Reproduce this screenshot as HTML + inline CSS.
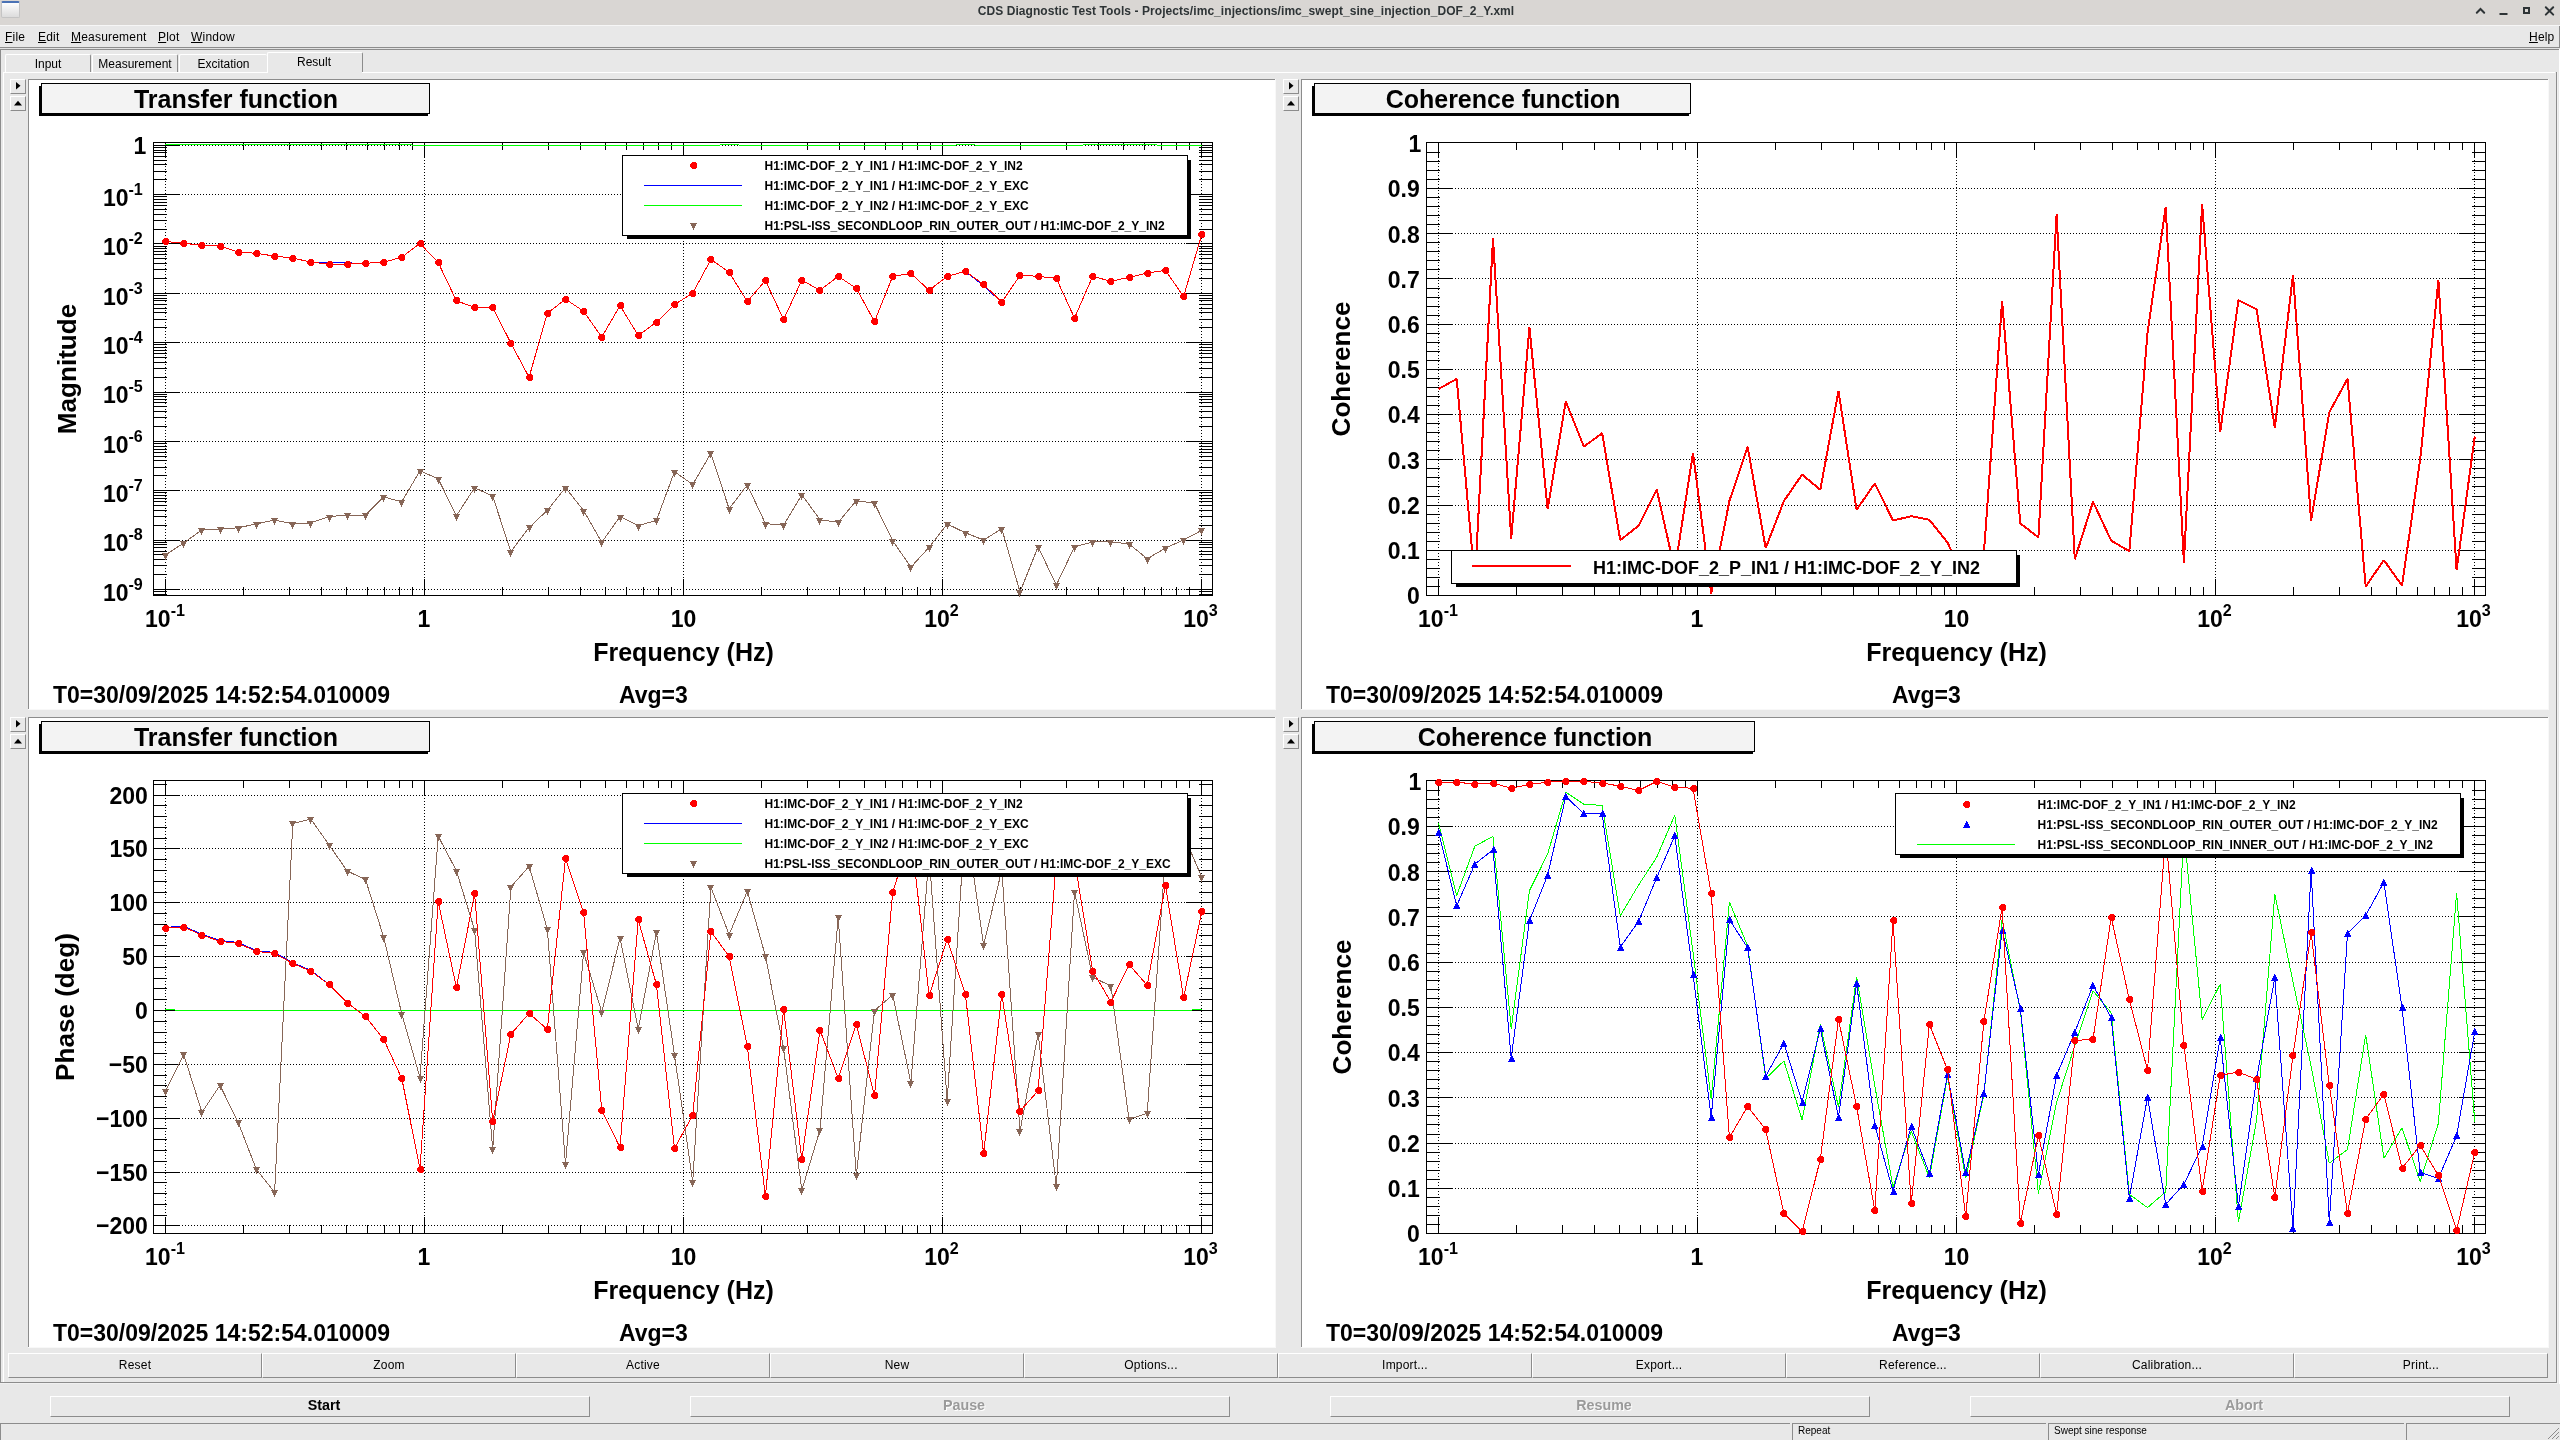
<!DOCTYPE html>
<html><head><meta charset="utf-8"><title>CDS Diagnostic Test Tools</title>
<style>
html,body{margin:0;padding:0;}
body{width:2560px;height:1440px;overflow:hidden;background:#e8e8e8;font-family:"Liberation Sans",sans-serif;font-size:12px;color:#000;position:relative}
div,span{box-sizing:border-box}
#titlebar{position:absolute;left:0;top:0;width:2560px;height:25px;background:#d9d6d3}
#titletext{position:absolute;left:0;top:4px;width:2492px;text-align:center;font-weight:bold;font-size:12px;letter-spacing:0.07px;color:#2e3436;white-space:nowrap}
#menubar{position:absolute;left:0;top:25px;width:2560px;height:23px;background:#e8e8e8;border-top:1px solid #f6f6f6}
.mi{position:absolute;top:4px;font-size:12px;white-space:nowrap;letter-spacing:0.2px}
.mi u{text-decoration:underline;text-underline-offset:0.5px}
.tab{position:absolute;top:54px;height:19px;border:1px solid #ffffff;border-bottom:none;border-right:1px solid #8c8c8c;border-radius:2px 2px 0 0;text-align:center;line-height:19px;font-size:12px;background:#e8e8e8}
.sb{position:absolute;width:16px;height:15px;background:#e8e8e8;border-top:1px solid #ffffff;border-left:1px solid #ffffff;border-right:1px solid #8c8c8c;border-bottom:1px solid #8c8c8c}
.tb{position:absolute;text-align:center;line-height:22px;font-size:12px;letter-spacing:0.2px;border-top:1px solid #ffffff;border-left:1px solid #ffffff;border-right:1px solid #8c8c8c;border-bottom:1px solid #8c8c8c;background:#e8e8e8}
.cb{position:absolute;text-align:center;line-height:16px;font-size:14.3px;font-weight:bold;padding-left:8px;border-top:1px solid #ffffff;border-left:1px solid #ffffff;border-right:1px solid #8c8c8c;border-bottom:1px solid #8c8c8c;background:#e8e8e8}
.cb.dis{color:#9a9a9a;text-shadow:1px 1px 0 #fff}
.st{position:absolute;top:1423px;height:17px;border-top:1px solid #8c8c8c;border-left:1px solid #8c8c8c;font-size:10px;line-height:14px;padding-left:5px;white-space:nowrap}
#root{position:absolute;left:0;top:0;width:2560px;height:1440px;background:#e8e8e8;will-change:transform;overflow:hidden}
</style></head><body><div id="root">
<div id="titlebar">
 <div style="position:absolute;left:1px;top:1px;width:19px;height:17px;border-radius:2px;background:linear-gradient(#fdfdfd,#dcdcdc);border:1px solid #c4c4c4;border-top:2px solid #4a72b5"></div>
 <div id="titletext">CDS Diagnostic Test Tools - Projects/imc_injections/imc_swept_sine_injection_DOF_2_Y.xml</div>
 <svg width="90" height="20" style="position:absolute;left:2470px;top:0" fill="none" stroke="#2e3436" stroke-width="2" stroke-linecap="round">
  <path d="M6.8,12.7 L10.5,9 L14.2,12.7"/>
  <path d="M29.5,14 h8" stroke-linecap="butt"/>
  <rect x="54" y="8" width="5" height="5" stroke-linecap="butt"/>
  <path d="M75.8,7.2 l7.4,7.4 M83.2,7.2 l-7.4,7.4"/>
 </svg>
</div>
<div id="menubar"><span class="mi" style="left:5px"><u>F</u>ile</span><span class="mi" style="left:38px"><u>E</u>dit</span><span class="mi" style="left:71px"><u>M</u>easurement</span><span class="mi" style="left:158px"><u>P</u>lot</span><span class="mi" style="left:191px"><u>W</u>indow</span><span class="mi" style="left:2529px"><u>H</u>elp</span></div>
<div style="position:absolute;left:0;top:47px;width:2560px;height:1px;background:#8c8c8c"></div>
<div style="position:absolute;left:2559px;top:26px;width:1px;height:22px;background:#8c8c8c"></div>
<div style="position:absolute;left:0;top:48px;width:2560px;height:1px;background:#e2e2e2"></div>
<!-- outer frame -->
<div style="position:absolute;left:0;top:49px;width:2559px;height:1px;background:#8c8c8c"></div>
<div style="position:absolute;left:0;top:49px;width:1px;height:1334px;background:#8c8c8c"></div>
<div style="position:absolute;left:2559px;top:49px;width:1px;height:1335px;background:#ffffff"></div>
<div style="position:absolute;left:3px;top:72px;width:1px;height:1310px;background:#ffffff"></div>
<div style="position:absolute;left:2556px;top:72px;width:1px;height:1311px;background:#8c8c8c"></div>
<div style="position:absolute;left:2557px;top:72px;width:1px;height:1312px;background:#f0f0f0"></div>
<!-- tabs -->
<div class="tab" style="left:5px;width:86px">Input</div>
<div class="tab" style="left:92px;width:86px">Measurement</div>
<div class="tab" style="left:179px;width:88px;border-right:none">Excitation</div>
<div class="tab" style="left:267px;top:52px;width:96px;height:21px;line-height:18px;padding-right:2px">Result</div>
<div style="position:absolute;left:3px;top:72px;width:264px;height:1px;background:#ffffff"></div>
<div style="position:absolute;left:362px;top:72px;width:2193px;height:1px;background:#ffffff"></div>
<div class="sb" style="left:10px;top:79px"><svg width="16" height="15" style="position:absolute;left:0;top:0"><path d="M5,2 L9.5,5.7 L5,9.5 z" fill="#000"/></svg></div><div class="sb" style="left:10px;top:96px"><svg width="16" height="15" style="position:absolute;left:0;top:0"><path d="M3,8.5 L7,3.8 L11,8.5 z" fill="#000"/></svg></div><div class="sb" style="left:10px;top:717px"><svg width="16" height="15" style="position:absolute;left:0;top:0"><path d="M5,2 L9.5,5.7 L5,9.5 z" fill="#000"/></svg></div><div class="sb" style="left:10px;top:734px"><svg width="16" height="15" style="position:absolute;left:0;top:0"><path d="M3,8.5 L7,3.8 L11,8.5 z" fill="#000"/></svg></div><div class="sb" style="left:1283px;top:79px"><svg width="16" height="15" style="position:absolute;left:0;top:0"><path d="M5,2 L9.5,5.7 L5,9.5 z" fill="#000"/></svg></div><div class="sb" style="left:1283px;top:96px"><svg width="16" height="15" style="position:absolute;left:0;top:0"><path d="M3,8.5 L7,3.8 L11,8.5 z" fill="#000"/></svg></div><div class="sb" style="left:1283px;top:717px"><svg width="16" height="15" style="position:absolute;left:0;top:0"><path d="M5,2 L9.5,5.7 L5,9.5 z" fill="#000"/></svg></div><div class="sb" style="left:1283px;top:734px"><svg width="16" height="15" style="position:absolute;left:0;top:0"><path d="M3,8.5 L7,3.8 L11,8.5 z" fill="#000"/></svg></div>
<div class="tb" style="left:8px;top:1353px;width:254px;height:25px">Reset</div><div class="tb" style="left:262px;top:1353px;width:254px;height:25px">Zoom</div><div class="tb" style="left:516px;top:1353px;width:254px;height:25px">Active</div><div class="tb" style="left:770px;top:1353px;width:254px;height:25px">New</div><div class="tb" style="left:1024px;top:1353px;width:254px;height:25px">Options...</div><div class="tb" style="left:1278px;top:1353px;width:254px;height:25px">Import...</div><div class="tb" style="left:1532px;top:1353px;width:254px;height:25px">Export...</div><div class="tb" style="left:1786px;top:1353px;width:254px;height:25px">Reference...</div><div class="tb" style="left:2040px;top:1353px;width:254px;height:25px">Calibration...</div><div class="tb" style="left:2294px;top:1353px;width:254px;height:25px">Print...</div>
<div style="position:absolute;left:0;top:1382px;width:2557px;height:1px;background:#8c8c8c"></div>
<div style="position:absolute;left:0;top:1383px;width:2558px;height:1px;background:#f0f0f0"></div>
<div class="cb" style="left:50px;top:1396px;width:540px;height:21px">Start</div><div class="cb dis" style="left:690px;top:1396px;width:540px;height:21px">Pause</div><div class="cb dis" style="left:1330px;top:1396px;width:540px;height:21px">Resume</div><div class="cb dis" style="left:1970px;top:1396px;width:540px;height:21px">Abort</div>
<div class="st" style="left:0;width:1790px"></div>
<div class="st" style="left:1792px;width:254px">Repeat</div>
<div class="st" style="left:2048px;width:356px">Swept sine response</div>
<div class="st" style="left:2406px;width:154px"></div>
<svg width="12" height="12" style="position:absolute;left:2547px;top:1427px" stroke="#8c8c8c" stroke-width="1"><path d="M1,12 L12,1 M5,12 L12,5 M9,12 L12,9"/></svg>
<svg width="2560" height="1440" viewBox="0 0 2560 1440" style="position:absolute;left:0;top:0" font-family="Liberation Sans, sans-serif" fill="#000">
<rect x="29" y="80" width="1246" height="629" fill="#fff"/>
<rect x="28" y="79" width="1247" height="1" fill="#8c8c8c"/>
<rect x="28" y="79" width="1" height="630" fill="#8c8c8c"/>
<rect x="28" y="709" width="1248" height="1" fill="#f8f8f8"/>
<rect x="1275" y="79" width="1" height="631" fill="#f8f8f8"/>
<rect x="1302" y="80" width="1246" height="629" fill="#fff"/>
<rect x="1301" y="79" width="1247" height="1" fill="#8c8c8c"/>
<rect x="1301" y="79" width="1" height="630" fill="#8c8c8c"/>
<rect x="1301" y="709" width="1248" height="1" fill="#f8f8f8"/>
<rect x="2548" y="79" width="1" height="631" fill="#f8f8f8"/>
<rect x="29" y="718" width="1246" height="629" fill="#fff"/>
<rect x="28" y="717" width="1247" height="1" fill="#8c8c8c"/>
<rect x="28" y="717" width="1" height="630" fill="#8c8c8c"/>
<rect x="28" y="1347" width="1248" height="1" fill="#f8f8f8"/>
<rect x="1275" y="717" width="1" height="631" fill="#f8f8f8"/>
<rect x="1302" y="718" width="1246" height="629" fill="#fff"/>
<rect x="1301" y="717" width="1247" height="1" fill="#8c8c8c"/>
<rect x="1301" y="717" width="1" height="630" fill="#8c8c8c"/>
<rect x="1301" y="1347" width="1248" height="1" fill="#f8f8f8"/>
<rect x="2548" y="717" width="1" height="631" fill="#f8f8f8"/>
<line x1="165.5" x2="165.5" y1="142" y2="595" stroke="#000" stroke-width="1" stroke-dasharray="1,2" shape-rendering="crispEdges"/>
<line x1="424.5" x2="424.5" y1="142" y2="595" stroke="#000" stroke-width="1" stroke-dasharray="1,2" shape-rendering="crispEdges"/>
<line x1="683.5" x2="683.5" y1="142" y2="595" stroke="#000" stroke-width="1" stroke-dasharray="1,2" shape-rendering="crispEdges"/>
<line x1="942.5" x2="942.5" y1="142" y2="595" stroke="#000" stroke-width="1" stroke-dasharray="1,2" shape-rendering="crispEdges"/>
<line x1="1201.5" x2="1201.5" y1="142" y2="595" stroke="#000" stroke-width="1" stroke-dasharray="1,2" shape-rendering="crispEdges"/>
<rect x="165" y="579" width="1" height="17" fill="#000"/>
<rect x="165" y="142" width="1" height="16" fill="#000"/>
<rect x="243" y="587" width="1" height="9" fill="#000"/>
<rect x="243" y="142" width="1" height="8" fill="#000"/>
<rect x="289" y="587" width="1" height="9" fill="#000"/>
<rect x="289" y="142" width="1" height="8" fill="#000"/>
<rect x="321" y="587" width="1" height="9" fill="#000"/>
<rect x="321" y="142" width="1" height="8" fill="#000"/>
<rect x="346" y="587" width="1" height="9" fill="#000"/>
<rect x="346" y="142" width="1" height="8" fill="#000"/>
<rect x="367" y="587" width="1" height="9" fill="#000"/>
<rect x="367" y="142" width="1" height="8" fill="#000"/>
<rect x="384" y="587" width="1" height="9" fill="#000"/>
<rect x="384" y="142" width="1" height="8" fill="#000"/>
<rect x="399" y="587" width="1" height="9" fill="#000"/>
<rect x="399" y="142" width="1" height="8" fill="#000"/>
<rect x="412" y="587" width="1" height="9" fill="#000"/>
<rect x="412" y="142" width="1" height="8" fill="#000"/>
<rect x="424" y="579" width="1" height="17" fill="#000"/>
<rect x="424" y="142" width="1" height="16" fill="#000"/>
<rect x="502" y="587" width="1" height="9" fill="#000"/>
<rect x="502" y="142" width="1" height="8" fill="#000"/>
<rect x="548" y="587" width="1" height="9" fill="#000"/>
<rect x="548" y="142" width="1" height="8" fill="#000"/>
<rect x="580" y="587" width="1" height="9" fill="#000"/>
<rect x="580" y="142" width="1" height="8" fill="#000"/>
<rect x="605" y="587" width="1" height="9" fill="#000"/>
<rect x="605" y="142" width="1" height="8" fill="#000"/>
<rect x="626" y="587" width="1" height="9" fill="#000"/>
<rect x="626" y="142" width="1" height="8" fill="#000"/>
<rect x="643" y="587" width="1" height="9" fill="#000"/>
<rect x="643" y="142" width="1" height="8" fill="#000"/>
<rect x="658" y="587" width="1" height="9" fill="#000"/>
<rect x="658" y="142" width="1" height="8" fill="#000"/>
<rect x="671" y="587" width="1" height="9" fill="#000"/>
<rect x="671" y="142" width="1" height="8" fill="#000"/>
<rect x="683" y="579" width="1" height="17" fill="#000"/>
<rect x="683" y="142" width="1" height="16" fill="#000"/>
<rect x="761" y="587" width="1" height="9" fill="#000"/>
<rect x="761" y="142" width="1" height="8" fill="#000"/>
<rect x="807" y="587" width="1" height="9" fill="#000"/>
<rect x="807" y="142" width="1" height="8" fill="#000"/>
<rect x="839" y="587" width="1" height="9" fill="#000"/>
<rect x="839" y="142" width="1" height="8" fill="#000"/>
<rect x="864" y="587" width="1" height="9" fill="#000"/>
<rect x="864" y="142" width="1" height="8" fill="#000"/>
<rect x="885" y="587" width="1" height="9" fill="#000"/>
<rect x="885" y="142" width="1" height="8" fill="#000"/>
<rect x="902" y="587" width="1" height="9" fill="#000"/>
<rect x="902" y="142" width="1" height="8" fill="#000"/>
<rect x="917" y="587" width="1" height="9" fill="#000"/>
<rect x="917" y="142" width="1" height="8" fill="#000"/>
<rect x="930" y="587" width="1" height="9" fill="#000"/>
<rect x="930" y="142" width="1" height="8" fill="#000"/>
<rect x="942" y="579" width="1" height="17" fill="#000"/>
<rect x="942" y="142" width="1" height="16" fill="#000"/>
<rect x="1020" y="587" width="1" height="9" fill="#000"/>
<rect x="1020" y="142" width="1" height="8" fill="#000"/>
<rect x="1066" y="587" width="1" height="9" fill="#000"/>
<rect x="1066" y="142" width="1" height="8" fill="#000"/>
<rect x="1098" y="587" width="1" height="9" fill="#000"/>
<rect x="1098" y="142" width="1" height="8" fill="#000"/>
<rect x="1123" y="587" width="1" height="9" fill="#000"/>
<rect x="1123" y="142" width="1" height="8" fill="#000"/>
<rect x="1144" y="587" width="1" height="9" fill="#000"/>
<rect x="1144" y="142" width="1" height="8" fill="#000"/>
<rect x="1161" y="587" width="1" height="9" fill="#000"/>
<rect x="1161" y="142" width="1" height="8" fill="#000"/>
<rect x="1176" y="587" width="1" height="9" fill="#000"/>
<rect x="1176" y="142" width="1" height="8" fill="#000"/>
<rect x="1189" y="587" width="1" height="9" fill="#000"/>
<rect x="1189" y="142" width="1" height="8" fill="#000"/>
<rect x="1201" y="579" width="1" height="17" fill="#000"/>
<rect x="1201" y="142" width="1" height="16" fill="#000"/>
<rect x="153" y="142" width="1060" height="1" fill="#000"/>
<rect x="153" y="595" width="1060" height="1" fill="#000"/>
<rect x="153" y="142" width="1" height="454" fill="#000"/>
<rect x="1212" y="142" width="1" height="454" fill="#000"/>
<line x1="155" x2="1212" y1="145.5" y2="145.5" stroke="#000" stroke-width="1" stroke-dasharray="1,2" shape-rendering="crispEdges"/>
<rect x="153" y="145" width="27" height="1" fill="#000"/>
<rect x="1186" y="145" width="27" height="1" fill="#000"/>
<line x1="155" x2="1212" y1="194.5" y2="194.5" stroke="#000" stroke-width="1" stroke-dasharray="1,2" shape-rendering="crispEdges"/>
<rect x="153" y="194" width="27" height="1" fill="#000"/>
<rect x="1186" y="194" width="27" height="1" fill="#000"/>
<line x1="155" x2="1212" y1="243.5" y2="243.5" stroke="#000" stroke-width="1" stroke-dasharray="1,2" shape-rendering="crispEdges"/>
<rect x="153" y="243" width="27" height="1" fill="#000"/>
<rect x="1186" y="243" width="27" height="1" fill="#000"/>
<line x1="155" x2="1212" y1="293.5" y2="293.5" stroke="#000" stroke-width="1" stroke-dasharray="1,2" shape-rendering="crispEdges"/>
<rect x="153" y="293" width="27" height="1" fill="#000"/>
<rect x="1186" y="293" width="27" height="1" fill="#000"/>
<line x1="155" x2="1212" y1="342.5" y2="342.5" stroke="#000" stroke-width="1" stroke-dasharray="1,2" shape-rendering="crispEdges"/>
<rect x="153" y="342" width="27" height="1" fill="#000"/>
<rect x="1186" y="342" width="27" height="1" fill="#000"/>
<line x1="155" x2="1212" y1="392.5" y2="392.5" stroke="#000" stroke-width="1" stroke-dasharray="1,2" shape-rendering="crispEdges"/>
<rect x="153" y="392" width="27" height="1" fill="#000"/>
<rect x="1186" y="392" width="27" height="1" fill="#000"/>
<line x1="155" x2="1212" y1="441.5" y2="441.5" stroke="#000" stroke-width="1" stroke-dasharray="1,2" shape-rendering="crispEdges"/>
<rect x="153" y="441" width="27" height="1" fill="#000"/>
<rect x="1186" y="441" width="27" height="1" fill="#000"/>
<line x1="155" x2="1212" y1="490.5" y2="490.5" stroke="#000" stroke-width="1" stroke-dasharray="1,2" shape-rendering="crispEdges"/>
<rect x="153" y="490" width="27" height="1" fill="#000"/>
<rect x="1186" y="490" width="27" height="1" fill="#000"/>
<line x1="155" x2="1212" y1="540.5" y2="540.5" stroke="#000" stroke-width="1" stroke-dasharray="1,2" shape-rendering="crispEdges"/>
<rect x="153" y="540" width="27" height="1" fill="#000"/>
<rect x="1186" y="540" width="27" height="1" fill="#000"/>
<line x1="155" x2="1212" y1="589.5" y2="589.5" stroke="#000" stroke-width="1" stroke-dasharray="1,2" shape-rendering="crispEdges"/>
<rect x="153" y="589" width="27" height="1" fill="#000"/>
<rect x="1186" y="589" width="27" height="1" fill="#000"/>
<rect x="153" y="179" width="14" height="1" fill="#000"/>
<rect x="1199" y="179" width="14" height="1" fill="#000"/>
<rect x="153" y="171" width="14" height="1" fill="#000"/>
<rect x="1199" y="171" width="14" height="1" fill="#000"/>
<rect x="153" y="164" width="14" height="1" fill="#000"/>
<rect x="1199" y="164" width="14" height="1" fill="#000"/>
<rect x="153" y="160" width="14" height="1" fill="#000"/>
<rect x="1199" y="160" width="14" height="1" fill="#000"/>
<rect x="153" y="156" width="14" height="1" fill="#000"/>
<rect x="1199" y="156" width="14" height="1" fill="#000"/>
<rect x="153" y="152" width="14" height="1" fill="#000"/>
<rect x="1199" y="152" width="14" height="1" fill="#000"/>
<rect x="153" y="150" width="14" height="1" fill="#000"/>
<rect x="1199" y="150" width="14" height="1" fill="#000"/>
<rect x="153" y="147" width="14" height="1" fill="#000"/>
<rect x="1199" y="147" width="14" height="1" fill="#000"/>
<rect x="153" y="229" width="14" height="1" fill="#000"/>
<rect x="1199" y="229" width="14" height="1" fill="#000"/>
<rect x="153" y="220" width="14" height="1" fill="#000"/>
<rect x="1199" y="220" width="14" height="1" fill="#000"/>
<rect x="153" y="214" width="14" height="1" fill="#000"/>
<rect x="1199" y="214" width="14" height="1" fill="#000"/>
<rect x="153" y="209" width="14" height="1" fill="#000"/>
<rect x="1199" y="209" width="14" height="1" fill="#000"/>
<rect x="153" y="205" width="14" height="1" fill="#000"/>
<rect x="1199" y="205" width="14" height="1" fill="#000"/>
<rect x="153" y="202" width="14" height="1" fill="#000"/>
<rect x="1199" y="202" width="14" height="1" fill="#000"/>
<rect x="153" y="199" width="14" height="1" fill="#000"/>
<rect x="1199" y="199" width="14" height="1" fill="#000"/>
<rect x="153" y="196" width="14" height="1" fill="#000"/>
<rect x="1199" y="196" width="14" height="1" fill="#000"/>
<rect x="153" y="278" width="14" height="1" fill="#000"/>
<rect x="1199" y="278" width="14" height="1" fill="#000"/>
<rect x="153" y="269" width="14" height="1" fill="#000"/>
<rect x="1199" y="269" width="14" height="1" fill="#000"/>
<rect x="153" y="263" width="14" height="1" fill="#000"/>
<rect x="1199" y="263" width="14" height="1" fill="#000"/>
<rect x="153" y="258" width="14" height="1" fill="#000"/>
<rect x="1199" y="258" width="14" height="1" fill="#000"/>
<rect x="153" y="254" width="14" height="1" fill="#000"/>
<rect x="1199" y="254" width="14" height="1" fill="#000"/>
<rect x="153" y="251" width="14" height="1" fill="#000"/>
<rect x="1199" y="251" width="14" height="1" fill="#000"/>
<rect x="153" y="248" width="14" height="1" fill="#000"/>
<rect x="1199" y="248" width="14" height="1" fill="#000"/>
<rect x="153" y="246" width="14" height="1" fill="#000"/>
<rect x="1199" y="246" width="14" height="1" fill="#000"/>
<rect x="153" y="327" width="14" height="1" fill="#000"/>
<rect x="1199" y="327" width="14" height="1" fill="#000"/>
<rect x="153" y="319" width="14" height="1" fill="#000"/>
<rect x="1199" y="319" width="14" height="1" fill="#000"/>
<rect x="153" y="312" width="14" height="1" fill="#000"/>
<rect x="1199" y="312" width="14" height="1" fill="#000"/>
<rect x="153" y="308" width="14" height="1" fill="#000"/>
<rect x="1199" y="308" width="14" height="1" fill="#000"/>
<rect x="153" y="304" width="14" height="1" fill="#000"/>
<rect x="1199" y="304" width="14" height="1" fill="#000"/>
<rect x="153" y="300" width="14" height="1" fill="#000"/>
<rect x="1199" y="300" width="14" height="1" fill="#000"/>
<rect x="153" y="298" width="14" height="1" fill="#000"/>
<rect x="1199" y="298" width="14" height="1" fill="#000"/>
<rect x="153" y="295" width="14" height="1" fill="#000"/>
<rect x="1199" y="295" width="14" height="1" fill="#000"/>
<rect x="153" y="377" width="14" height="1" fill="#000"/>
<rect x="1199" y="377" width="14" height="1" fill="#000"/>
<rect x="153" y="368" width="14" height="1" fill="#000"/>
<rect x="1199" y="368" width="14" height="1" fill="#000"/>
<rect x="153" y="362" width="14" height="1" fill="#000"/>
<rect x="1199" y="362" width="14" height="1" fill="#000"/>
<rect x="153" y="357" width="14" height="1" fill="#000"/>
<rect x="1199" y="357" width="14" height="1" fill="#000"/>
<rect x="153" y="353" width="14" height="1" fill="#000"/>
<rect x="1199" y="353" width="14" height="1" fill="#000"/>
<rect x="153" y="350" width="14" height="1" fill="#000"/>
<rect x="1199" y="350" width="14" height="1" fill="#000"/>
<rect x="153" y="347" width="14" height="1" fill="#000"/>
<rect x="1199" y="347" width="14" height="1" fill="#000"/>
<rect x="153" y="344" width="14" height="1" fill="#000"/>
<rect x="1199" y="344" width="14" height="1" fill="#000"/>
<rect x="153" y="426" width="14" height="1" fill="#000"/>
<rect x="1199" y="426" width="14" height="1" fill="#000"/>
<rect x="153" y="417" width="14" height="1" fill="#000"/>
<rect x="1199" y="417" width="14" height="1" fill="#000"/>
<rect x="153" y="411" width="14" height="1" fill="#000"/>
<rect x="1199" y="411" width="14" height="1" fill="#000"/>
<rect x="153" y="406" width="14" height="1" fill="#000"/>
<rect x="1199" y="406" width="14" height="1" fill="#000"/>
<rect x="153" y="402" width="14" height="1" fill="#000"/>
<rect x="1199" y="402" width="14" height="1" fill="#000"/>
<rect x="153" y="399" width="14" height="1" fill="#000"/>
<rect x="1199" y="399" width="14" height="1" fill="#000"/>
<rect x="153" y="396" width="14" height="1" fill="#000"/>
<rect x="1199" y="396" width="14" height="1" fill="#000"/>
<rect x="153" y="394" width="14" height="1" fill="#000"/>
<rect x="1199" y="394" width="14" height="1" fill="#000"/>
<rect x="153" y="475" width="14" height="1" fill="#000"/>
<rect x="1199" y="475" width="14" height="1" fill="#000"/>
<rect x="153" y="467" width="14" height="1" fill="#000"/>
<rect x="1199" y="467" width="14" height="1" fill="#000"/>
<rect x="153" y="460" width="14" height="1" fill="#000"/>
<rect x="1199" y="460" width="14" height="1" fill="#000"/>
<rect x="153" y="456" width="14" height="1" fill="#000"/>
<rect x="1199" y="456" width="14" height="1" fill="#000"/>
<rect x="153" y="452" width="14" height="1" fill="#000"/>
<rect x="1199" y="452" width="14" height="1" fill="#000"/>
<rect x="153" y="449" width="14" height="1" fill="#000"/>
<rect x="1199" y="449" width="14" height="1" fill="#000"/>
<rect x="153" y="446" width="14" height="1" fill="#000"/>
<rect x="1199" y="446" width="14" height="1" fill="#000"/>
<rect x="153" y="443" width="14" height="1" fill="#000"/>
<rect x="1199" y="443" width="14" height="1" fill="#000"/>
<rect x="153" y="525" width="14" height="1" fill="#000"/>
<rect x="1199" y="525" width="14" height="1" fill="#000"/>
<rect x="153" y="516" width="14" height="1" fill="#000"/>
<rect x="1199" y="516" width="14" height="1" fill="#000"/>
<rect x="153" y="510" width="14" height="1" fill="#000"/>
<rect x="1199" y="510" width="14" height="1" fill="#000"/>
<rect x="153" y="505" width="14" height="1" fill="#000"/>
<rect x="1199" y="505" width="14" height="1" fill="#000"/>
<rect x="153" y="501" width="14" height="1" fill="#000"/>
<rect x="1199" y="501" width="14" height="1" fill="#000"/>
<rect x="153" y="498" width="14" height="1" fill="#000"/>
<rect x="1199" y="498" width="14" height="1" fill="#000"/>
<rect x="153" y="495" width="14" height="1" fill="#000"/>
<rect x="1199" y="495" width="14" height="1" fill="#000"/>
<rect x="153" y="492" width="14" height="1" fill="#000"/>
<rect x="1199" y="492" width="14" height="1" fill="#000"/>
<rect x="153" y="574" width="14" height="1" fill="#000"/>
<rect x="1199" y="574" width="14" height="1" fill="#000"/>
<rect x="153" y="565" width="14" height="1" fill="#000"/>
<rect x="1199" y="565" width="14" height="1" fill="#000"/>
<rect x="153" y="559" width="14" height="1" fill="#000"/>
<rect x="1199" y="559" width="14" height="1" fill="#000"/>
<rect x="153" y="554" width="14" height="1" fill="#000"/>
<rect x="1199" y="554" width="14" height="1" fill="#000"/>
<rect x="153" y="551" width="14" height="1" fill="#000"/>
<rect x="1199" y="551" width="14" height="1" fill="#000"/>
<rect x="153" y="547" width="14" height="1" fill="#000"/>
<rect x="1199" y="547" width="14" height="1" fill="#000"/>
<rect x="153" y="544" width="14" height="1" fill="#000"/>
<rect x="1199" y="544" width="14" height="1" fill="#000"/>
<rect x="153" y="542" width="14" height="1" fill="#000"/>
<rect x="1199" y="542" width="14" height="1" fill="#000"/>
<rect x="153" y="594" width="14" height="1" fill="#000"/>
<rect x="1199" y="594" width="14" height="1" fill="#000"/>
<rect x="153" y="591" width="14" height="1" fill="#000"/>
<rect x="1199" y="591" width="14" height="1" fill="#000"/>
<polyline points="165.5,241.4 183.7,243.3 201.9,245.2 220.0,246.1 238.2,252.2 256.4,253.3 274.6,256.1 292.8,258.0 310.9,262.2 329.1,262.9 347.3,262.9 365.5,263.3 383.7,262.2 401.8,257.2 420.0,243.4 438.2,262.5 456.4,300.8 474.6,307.3 492.7,307.3 510.9,343.3 529.1,377.3 547.3,313.3 565.5,299.2 583.6,311.3 601.8,337.2 620.0,305.5 638.2,335.5 656.4,322.3 674.5,304.4 692.7,293.3 710.9,259.4 729.1,272.2 747.3,301.6 765.4,280.5 783.6,319.5 801.8,280.2 820.0,290.3 838.2,276.3 856.3,288.3 874.5,321.6 892.7,276.3 910.9,273.4 929.1,290.3 947.2,276.3 965.4,271.4 983.6,285.9 1001.8,302.3 1020.0,275.3 1038.1,276.3 1056.3,278.4 1074.5,318.0 1092.7,276.3 1110.9,281.3 1129.0,277.3 1147.2,273.1 1165.4,270.3 1183.6,296.6 1201.8,234.4" fill="none" stroke="#0000ff" stroke-width="1" shape-rendering="crispEdges" stroke-linejoin="bevel"/>
<rect x="165" y="144" width="247" height="1" fill="#00ff00"/>
<rect x="412" y="145" width="308" height="1" fill="#00ff00"/>
<rect x="720" y="144" width="19" height="1" fill="#00ff00"/>
<rect x="739" y="145" width="217" height="1" fill="#00ff00"/>
<rect x="956" y="144" width="19" height="1" fill="#00ff00"/>
<rect x="975" y="145" width="108" height="1" fill="#00ff00"/>
<rect x="1083" y="144" width="74" height="1" fill="#00ff00"/>
<rect x="1157" y="145" width="45" height="1" fill="#00ff00"/>
<polyline points="165.5,554.8 183.7,543.1 201.9,529.8 220.0,529.1 238.2,527.8 256.4,523.9 274.6,520.0 292.8,523.9 310.9,522.8 329.1,516.6 347.3,515.0 365.5,515.0 383.7,497.0 401.8,501.7 420.0,470.8 438.2,478.8 456.4,515.8 474.6,487.7 492.7,496.3 510.9,551.7 529.1,527.5 547.3,510.3 565.5,487.7 583.6,510.6 601.8,542.3 620.0,516.6 638.2,525.6 656.4,520.5 674.5,471.7 692.7,484.5 710.9,453.3 729.1,508.8 747.3,485.0 765.4,523.6 783.6,525.2 801.8,494.7 820.0,519.7 838.2,522.3 856.3,500.6 874.5,503.3 892.7,540.8 910.9,567.1 929.1,547.3 947.2,524.0 965.4,532.8 983.6,540.0 1001.8,528.8 1020.0,591.9 1038.1,546.9 1056.3,585.0 1074.5,546.9 1092.7,541.9 1110.9,541.9 1129.0,543.8 1147.2,558.8 1165.4,548.1 1183.6,540.0 1201.8,530.3" fill="none" stroke="#876657" stroke-width="1" shape-rendering="crispEdges" stroke-linejoin="bevel"/>
<path d="M161.5,552.5 h8.0 L165.5,560.0 z" fill="#876657" shape-rendering="crispEdges"/>
<path d="M179.5,540.5 h8.0 L183.5,548.0 z" fill="#876657" shape-rendering="crispEdges"/>
<path d="M197.5,527.5 h8.0 L201.5,535.0 z" fill="#876657" shape-rendering="crispEdges"/>
<path d="M216.5,526.5 h8.0 L220.5,534.0 z" fill="#876657" shape-rendering="crispEdges"/>
<path d="M234.5,525.5 h8.0 L238.5,533.0 z" fill="#876657" shape-rendering="crispEdges"/>
<path d="M252.5,521.5 h8.0 L256.5,529.0 z" fill="#876657" shape-rendering="crispEdges"/>
<path d="M270.5,517.5 h8.0 L274.5,525.0 z" fill="#876657" shape-rendering="crispEdges"/>
<path d="M288.5,521.5 h8.0 L292.5,529.0 z" fill="#876657" shape-rendering="crispEdges"/>
<path d="M306.5,520.5 h8.0 L310.5,528.0 z" fill="#876657" shape-rendering="crispEdges"/>
<path d="M325.5,514.5 h8.0 L329.5,522.0 z" fill="#876657" shape-rendering="crispEdges"/>
<path d="M343.5,512.5 h8.0 L347.5,520.0 z" fill="#876657" shape-rendering="crispEdges"/>
<path d="M361.5,512.5 h8.0 L365.5,520.0 z" fill="#876657" shape-rendering="crispEdges"/>
<path d="M379.5,494.5 h8.0 L383.5,502.0 z" fill="#876657" shape-rendering="crispEdges"/>
<path d="M397.5,499.5 h8.0 L401.5,507.0 z" fill="#876657" shape-rendering="crispEdges"/>
<path d="M416.5,468.5 h8.0 L420.5,476.0 z" fill="#876657" shape-rendering="crispEdges"/>
<path d="M434.5,476.5 h8.0 L438.5,484.0 z" fill="#876657" shape-rendering="crispEdges"/>
<path d="M452.5,513.5 h8.0 L456.5,521.0 z" fill="#876657" shape-rendering="crispEdges"/>
<path d="M470.5,485.5 h8.0 L474.5,493.0 z" fill="#876657" shape-rendering="crispEdges"/>
<path d="M488.5,493.5 h8.0 L492.5,501.0 z" fill="#876657" shape-rendering="crispEdges"/>
<path d="M506.5,549.5 h8.0 L510.5,557.0 z" fill="#876657" shape-rendering="crispEdges"/>
<path d="M525.5,524.5 h8.0 L529.5,532.0 z" fill="#876657" shape-rendering="crispEdges"/>
<path d="M543.5,507.5 h8.0 L547.5,515.0 z" fill="#876657" shape-rendering="crispEdges"/>
<path d="M561.5,485.5 h8.0 L565.5,493.0 z" fill="#876657" shape-rendering="crispEdges"/>
<path d="M579.5,508.5 h8.0 L583.5,516.0 z" fill="#876657" shape-rendering="crispEdges"/>
<path d="M597.5,539.5 h8.0 L601.5,547.0 z" fill="#876657" shape-rendering="crispEdges"/>
<path d="M616.5,514.5 h8.0 L620.5,522.0 z" fill="#876657" shape-rendering="crispEdges"/>
<path d="M634.5,523.5 h8.0 L638.5,531.0 z" fill="#876657" shape-rendering="crispEdges"/>
<path d="M652.5,517.5 h8.0 L656.5,525.0 z" fill="#876657" shape-rendering="crispEdges"/>
<path d="M670.5,469.5 h8.0 L674.5,477.0 z" fill="#876657" shape-rendering="crispEdges"/>
<path d="M688.5,481.5 h8.0 L692.5,489.0 z" fill="#876657" shape-rendering="crispEdges"/>
<path d="M706.5,450.5 h8.0 L710.5,458.0 z" fill="#876657" shape-rendering="crispEdges"/>
<path d="M725.5,506.5 h8.0 L729.5,514.0 z" fill="#876657" shape-rendering="crispEdges"/>
<path d="M743.5,482.5 h8.0 L747.5,490.0 z" fill="#876657" shape-rendering="crispEdges"/>
<path d="M761.5,521.5 h8.0 L765.5,529.0 z" fill="#876657" shape-rendering="crispEdges"/>
<path d="M779.5,522.5 h8.0 L783.5,530.0 z" fill="#876657" shape-rendering="crispEdges"/>
<path d="M797.5,492.5 h8.0 L801.5,500.0 z" fill="#876657" shape-rendering="crispEdges"/>
<path d="M815.5,517.5 h8.0 L819.5,525.0 z" fill="#876657" shape-rendering="crispEdges"/>
<path d="M834.5,519.5 h8.0 L838.5,527.0 z" fill="#876657" shape-rendering="crispEdges"/>
<path d="M852.5,498.5 h8.0 L856.5,506.0 z" fill="#876657" shape-rendering="crispEdges"/>
<path d="M870.5,500.5 h8.0 L874.5,508.0 z" fill="#876657" shape-rendering="crispEdges"/>
<path d="M888.5,538.5 h8.0 L892.5,546.0 z" fill="#876657" shape-rendering="crispEdges"/>
<path d="M906.5,564.5 h8.0 L910.5,572.0 z" fill="#876657" shape-rendering="crispEdges"/>
<path d="M925.5,544.5 h8.0 L929.5,552.0 z" fill="#876657" shape-rendering="crispEdges"/>
<path d="M943.5,521.5 h8.0 L947.5,529.0 z" fill="#876657" shape-rendering="crispEdges"/>
<path d="M961.5,530.5 h8.0 L965.5,538.0 z" fill="#876657" shape-rendering="crispEdges"/>
<path d="M979.5,537.5 h8.0 L983.5,545.0 z" fill="#876657" shape-rendering="crispEdges"/>
<path d="M997.5,526.5 h8.0 L1001.5,534.0 z" fill="#876657" shape-rendering="crispEdges"/>
<path d="M1015.5,589.5 h8.0 L1019.5,597.0 z" fill="#876657" shape-rendering="crispEdges"/>
<path d="M1034.5,544.5 h8.0 L1038.5,552.0 z" fill="#876657" shape-rendering="crispEdges"/>
<path d="M1052.5,582.5 h8.0 L1056.5,590.0 z" fill="#876657" shape-rendering="crispEdges"/>
<path d="M1070.5,544.5 h8.0 L1074.5,552.0 z" fill="#876657" shape-rendering="crispEdges"/>
<path d="M1088.5,539.5 h8.0 L1092.5,547.0 z" fill="#876657" shape-rendering="crispEdges"/>
<path d="M1106.5,539.5 h8.0 L1110.5,547.0 z" fill="#876657" shape-rendering="crispEdges"/>
<path d="M1125.5,541.5 h8.0 L1129.5,549.0 z" fill="#876657" shape-rendering="crispEdges"/>
<path d="M1143.5,556.5 h8.0 L1147.5,564.0 z" fill="#876657" shape-rendering="crispEdges"/>
<path d="M1161.5,545.5 h8.0 L1165.5,553.0 z" fill="#876657" shape-rendering="crispEdges"/>
<path d="M1179.5,537.5 h8.0 L1183.5,545.0 z" fill="#876657" shape-rendering="crispEdges"/>
<path d="M1197.5,527.5 h8.0 L1201.5,535.0 z" fill="#876657" shape-rendering="crispEdges"/>
<polyline points="165.5,241.4 183.7,243.3 201.9,245.2 220.0,246.1 238.2,252.2 256.4,253.3 274.6,256.1 292.8,258.0 310.9,262.2 329.1,264.1 347.3,264.1 365.5,263.3 383.7,262.2 401.8,257.2 420.0,243.4 438.2,262.5 456.4,300.8 474.6,307.3 492.7,307.3 510.9,343.3 529.1,377.3 547.3,313.3 565.5,299.2 583.6,311.3 601.8,337.2 620.0,305.5 638.2,335.5 656.4,322.3 674.5,304.4 692.7,293.3 710.9,259.4 729.1,272.2 747.3,301.6 765.4,280.5 783.6,319.5 801.8,280.2 820.0,290.3 838.2,276.3 856.3,288.3 874.5,321.6 892.7,276.3 910.9,273.4 929.1,290.3 947.2,276.3 965.4,271.4 983.6,284.4 1001.8,302.3 1020.0,275.3 1038.1,276.3 1056.3,278.4 1074.5,318.0 1092.7,276.3 1110.9,281.3 1129.0,277.3 1147.2,273.1 1165.4,270.3 1183.6,296.6 1201.8,234.4" fill="none" stroke="#ff0000" stroke-width="1" shape-rendering="crispEdges" stroke-linejoin="bevel"/>
<path d="M164.0,238.0 h3 l2,2 v3 l-2,2 h-3 l-2,-2 v-3 z" fill="#ff0000" shape-rendering="crispEdges"/>
<path d="M182.0,240.0 h3 l2,2 v3 l-2,2 h-3 l-2,-2 v-3 z" fill="#ff0000" shape-rendering="crispEdges"/>
<path d="M200.0,242.0 h3 l2,2 v3 l-2,2 h-3 l-2,-2 v-3 z" fill="#ff0000" shape-rendering="crispEdges"/>
<path d="M219.0,243.0 h3 l2,2 v3 l-2,2 h-3 l-2,-2 v-3 z" fill="#ff0000" shape-rendering="crispEdges"/>
<path d="M237.0,249.0 h3 l2,2 v3 l-2,2 h-3 l-2,-2 v-3 z" fill="#ff0000" shape-rendering="crispEdges"/>
<path d="M255.0,250.0 h3 l2,2 v3 l-2,2 h-3 l-2,-2 v-3 z" fill="#ff0000" shape-rendering="crispEdges"/>
<path d="M273.0,253.0 h3 l2,2 v3 l-2,2 h-3 l-2,-2 v-3 z" fill="#ff0000" shape-rendering="crispEdges"/>
<path d="M291.0,255.0 h3 l2,2 v3 l-2,2 h-3 l-2,-2 v-3 z" fill="#ff0000" shape-rendering="crispEdges"/>
<path d="M309.0,259.0 h3 l2,2 v3 l-2,2 h-3 l-2,-2 v-3 z" fill="#ff0000" shape-rendering="crispEdges"/>
<path d="M328.0,261.0 h3 l2,2 v3 l-2,2 h-3 l-2,-2 v-3 z" fill="#ff0000" shape-rendering="crispEdges"/>
<path d="M346.0,261.0 h3 l2,2 v3 l-2,2 h-3 l-2,-2 v-3 z" fill="#ff0000" shape-rendering="crispEdges"/>
<path d="M364.0,260.0 h3 l2,2 v3 l-2,2 h-3 l-2,-2 v-3 z" fill="#ff0000" shape-rendering="crispEdges"/>
<path d="M382.0,259.0 h3 l2,2 v3 l-2,2 h-3 l-2,-2 v-3 z" fill="#ff0000" shape-rendering="crispEdges"/>
<path d="M400.0,254.0 h3 l2,2 v3 l-2,2 h-3 l-2,-2 v-3 z" fill="#ff0000" shape-rendering="crispEdges"/>
<path d="M419.0,240.0 h3 l2,2 v3 l-2,2 h-3 l-2,-2 v-3 z" fill="#ff0000" shape-rendering="crispEdges"/>
<path d="M437.0,259.0 h3 l2,2 v3 l-2,2 h-3 l-2,-2 v-3 z" fill="#ff0000" shape-rendering="crispEdges"/>
<path d="M455.0,297.0 h3 l2,2 v3 l-2,2 h-3 l-2,-2 v-3 z" fill="#ff0000" shape-rendering="crispEdges"/>
<path d="M473.0,304.0 h3 l2,2 v3 l-2,2 h-3 l-2,-2 v-3 z" fill="#ff0000" shape-rendering="crispEdges"/>
<path d="M491.0,304.0 h3 l2,2 v3 l-2,2 h-3 l-2,-2 v-3 z" fill="#ff0000" shape-rendering="crispEdges"/>
<path d="M509.0,340.0 h3 l2,2 v3 l-2,2 h-3 l-2,-2 v-3 z" fill="#ff0000" shape-rendering="crispEdges"/>
<path d="M528.0,374.0 h3 l2,2 v3 l-2,2 h-3 l-2,-2 v-3 z" fill="#ff0000" shape-rendering="crispEdges"/>
<path d="M546.0,310.0 h3 l2,2 v3 l-2,2 h-3 l-2,-2 v-3 z" fill="#ff0000" shape-rendering="crispEdges"/>
<path d="M564.0,296.0 h3 l2,2 v3 l-2,2 h-3 l-2,-2 v-3 z" fill="#ff0000" shape-rendering="crispEdges"/>
<path d="M582.0,308.0 h3 l2,2 v3 l-2,2 h-3 l-2,-2 v-3 z" fill="#ff0000" shape-rendering="crispEdges"/>
<path d="M600.0,334.0 h3 l2,2 v3 l-2,2 h-3 l-2,-2 v-3 z" fill="#ff0000" shape-rendering="crispEdges"/>
<path d="M619.0,302.0 h3 l2,2 v3 l-2,2 h-3 l-2,-2 v-3 z" fill="#ff0000" shape-rendering="crispEdges"/>
<path d="M637.0,332.0 h3 l2,2 v3 l-2,2 h-3 l-2,-2 v-3 z" fill="#ff0000" shape-rendering="crispEdges"/>
<path d="M655.0,319.0 h3 l2,2 v3 l-2,2 h-3 l-2,-2 v-3 z" fill="#ff0000" shape-rendering="crispEdges"/>
<path d="M673.0,301.0 h3 l2,2 v3 l-2,2 h-3 l-2,-2 v-3 z" fill="#ff0000" shape-rendering="crispEdges"/>
<path d="M691.0,290.0 h3 l2,2 v3 l-2,2 h-3 l-2,-2 v-3 z" fill="#ff0000" shape-rendering="crispEdges"/>
<path d="M709.0,256.0 h3 l2,2 v3 l-2,2 h-3 l-2,-2 v-3 z" fill="#ff0000" shape-rendering="crispEdges"/>
<path d="M728.0,269.0 h3 l2,2 v3 l-2,2 h-3 l-2,-2 v-3 z" fill="#ff0000" shape-rendering="crispEdges"/>
<path d="M746.0,298.0 h3 l2,2 v3 l-2,2 h-3 l-2,-2 v-3 z" fill="#ff0000" shape-rendering="crispEdges"/>
<path d="M764.0,277.0 h3 l2,2 v3 l-2,2 h-3 l-2,-2 v-3 z" fill="#ff0000" shape-rendering="crispEdges"/>
<path d="M782.0,316.0 h3 l2,2 v3 l-2,2 h-3 l-2,-2 v-3 z" fill="#ff0000" shape-rendering="crispEdges"/>
<path d="M800.0,277.0 h3 l2,2 v3 l-2,2 h-3 l-2,-2 v-3 z" fill="#ff0000" shape-rendering="crispEdges"/>
<path d="M818.0,287.0 h3 l2,2 v3 l-2,2 h-3 l-2,-2 v-3 z" fill="#ff0000" shape-rendering="crispEdges"/>
<path d="M837.0,273.0 h3 l2,2 v3 l-2,2 h-3 l-2,-2 v-3 z" fill="#ff0000" shape-rendering="crispEdges"/>
<path d="M855.0,285.0 h3 l2,2 v3 l-2,2 h-3 l-2,-2 v-3 z" fill="#ff0000" shape-rendering="crispEdges"/>
<path d="M873.0,318.0 h3 l2,2 v3 l-2,2 h-3 l-2,-2 v-3 z" fill="#ff0000" shape-rendering="crispEdges"/>
<path d="M891.0,273.0 h3 l2,2 v3 l-2,2 h-3 l-2,-2 v-3 z" fill="#ff0000" shape-rendering="crispEdges"/>
<path d="M909.0,270.0 h3 l2,2 v3 l-2,2 h-3 l-2,-2 v-3 z" fill="#ff0000" shape-rendering="crispEdges"/>
<path d="M928.0,287.0 h3 l2,2 v3 l-2,2 h-3 l-2,-2 v-3 z" fill="#ff0000" shape-rendering="crispEdges"/>
<path d="M946.0,273.0 h3 l2,2 v3 l-2,2 h-3 l-2,-2 v-3 z" fill="#ff0000" shape-rendering="crispEdges"/>
<path d="M964.0,268.0 h3 l2,2 v3 l-2,2 h-3 l-2,-2 v-3 z" fill="#ff0000" shape-rendering="crispEdges"/>
<path d="M982.0,281.0 h3 l2,2 v3 l-2,2 h-3 l-2,-2 v-3 z" fill="#ff0000" shape-rendering="crispEdges"/>
<path d="M1000.0,299.0 h3 l2,2 v3 l-2,2 h-3 l-2,-2 v-3 z" fill="#ff0000" shape-rendering="crispEdges"/>
<path d="M1018.0,272.0 h3 l2,2 v3 l-2,2 h-3 l-2,-2 v-3 z" fill="#ff0000" shape-rendering="crispEdges"/>
<path d="M1037.0,273.0 h3 l2,2 v3 l-2,2 h-3 l-2,-2 v-3 z" fill="#ff0000" shape-rendering="crispEdges"/>
<path d="M1055.0,275.0 h3 l2,2 v3 l-2,2 h-3 l-2,-2 v-3 z" fill="#ff0000" shape-rendering="crispEdges"/>
<path d="M1073.0,315.0 h3 l2,2 v3 l-2,2 h-3 l-2,-2 v-3 z" fill="#ff0000" shape-rendering="crispEdges"/>
<path d="M1091.0,273.0 h3 l2,2 v3 l-2,2 h-3 l-2,-2 v-3 z" fill="#ff0000" shape-rendering="crispEdges"/>
<path d="M1109.0,278.0 h3 l2,2 v3 l-2,2 h-3 l-2,-2 v-3 z" fill="#ff0000" shape-rendering="crispEdges"/>
<path d="M1128.0,274.0 h3 l2,2 v3 l-2,2 h-3 l-2,-2 v-3 z" fill="#ff0000" shape-rendering="crispEdges"/>
<path d="M1146.0,270.0 h3 l2,2 v3 l-2,2 h-3 l-2,-2 v-3 z" fill="#ff0000" shape-rendering="crispEdges"/>
<path d="M1164.0,267.0 h3 l2,2 v3 l-2,2 h-3 l-2,-2 v-3 z" fill="#ff0000" shape-rendering="crispEdges"/>
<path d="M1182.0,293.0 h3 l2,2 v3 l-2,2 h-3 l-2,-2 v-3 z" fill="#ff0000" shape-rendering="crispEdges"/>
<path d="M1200.0,231.0 h3 l2,2 v3 l-2,2 h-3 l-2,-2 v-3 z" fill="#ff0000" shape-rendering="crispEdges"/>
<rect x="627" y="236" width="564" height="3" fill="#000"/>
<rect x="1188" y="160" width="3" height="79" fill="#000"/>
<rect x="622.5" y="155.5" width="565" height="80" fill="#fff" stroke="#000" stroke-width="1"/>
<path d="M692.0,162.0 h3 l2,2 v3 l-2,2 h-3 l-2,-2 v-3 z" fill="#ff0000" shape-rendering="crispEdges"/>
<text x="764.5" y="170.12" font-size="12" text-anchor="start" font-weight="bold" >H1:IMC-DOF_2_Y_IN1 / H1:IMC-DOF_2_Y_IN2</text>
<rect x="644" y="185" width="98" height="1" fill="#0000ff"/>
<text x="764.5" y="190.12" font-size="12" text-anchor="start" font-weight="bold" >H1:IMC-DOF_2_Y_IN1 / H1:IMC-DOF_2_Y_EXC</text>
<rect x="644" y="205" width="98" height="1" fill="#00ff00"/>
<text x="764.5" y="210.12" font-size="12" text-anchor="start" font-weight="bold" >H1:IMC-DOF_2_Y_IN2 / H1:IMC-DOF_2_Y_EXC</text>
<path d="M689.5,222.5 h8.0 L693.5,230.0 z" fill="#876657" shape-rendering="crispEdges"/>
<text x="764.5" y="230.12" font-size="12" text-anchor="start" font-weight="bold" >H1:PSL-ISS_SECONDLOOP_RIN_OUTER_OUT / H1:IMC-DOF_2_Y_IN2</text>
<text transform="translate(165.0,627) scale(1,1.06)" font-size="23" text-anchor="middle" font-weight="bold" >10<tspan font-size="16.1" dy="-10.3">-1</tspan></text>
<text transform="translate(424.0,627) scale(1,1.06)" font-size="23" text-anchor="middle" font-weight="bold" >1</text>
<text transform="translate(683.5,627) scale(1,1.06)" font-size="23" text-anchor="middle" font-weight="bold" >10</text>
<text transform="translate(941.5,627) scale(1,1.06)" font-size="23" text-anchor="middle" font-weight="bold" >10<tspan font-size="16.1" dy="-10.3">2</tspan></text>
<text transform="translate(1200.5,627) scale(1,1.06)" font-size="23" text-anchor="middle" font-weight="bold" >10<tspan font-size="16.1" dy="-10.3">3</tspan></text>
<text transform="translate(146.2,154) scale(1,1.06)" font-size="23" text-anchor="end" font-weight="bold" >1</text>
<text transform="translate(142.8,205.9) scale(1,1.06)" font-size="23" text-anchor="end" font-weight="bold" >10<tspan font-size="16.1" dy="-10.3">-1</tspan></text>
<text transform="translate(142.8,255.25) scale(1,1.06)" font-size="23" text-anchor="end" font-weight="bold" >10<tspan font-size="16.1" dy="-10.3">-2</tspan></text>
<text transform="translate(142.8,304.6) scale(1,1.06)" font-size="23" text-anchor="end" font-weight="bold" >10<tspan font-size="16.1" dy="-10.3">-3</tspan></text>
<text transform="translate(142.8,353.95) scale(1,1.06)" font-size="23" text-anchor="end" font-weight="bold" >10<tspan font-size="16.1" dy="-10.3">-4</tspan></text>
<text transform="translate(142.8,403.3) scale(1,1.06)" font-size="23" text-anchor="end" font-weight="bold" >10<tspan font-size="16.1" dy="-10.3">-5</tspan></text>
<text transform="translate(142.8,452.65000000000003) scale(1,1.06)" font-size="23" text-anchor="end" font-weight="bold" >10<tspan font-size="16.1" dy="-10.3">-6</tspan></text>
<text transform="translate(142.8,502.0) scale(1,1.06)" font-size="23" text-anchor="end" font-weight="bold" >10<tspan font-size="16.1" dy="-10.3">-7</tspan></text>
<text transform="translate(142.8,551.3499999999999) scale(1,1.06)" font-size="23" text-anchor="end" font-weight="bold" >10<tspan font-size="16.1" dy="-10.3">-8</tspan></text>
<text transform="translate(142.8,600.7) scale(1,1.06)" font-size="23" text-anchor="end" font-weight="bold" >10<tspan font-size="16.1" dy="-10.3">-9</tspan></text>
<text x="683.5" y="661" font-size="25" text-anchor="middle" font-weight="bold" >Frequency (Hz)</text>
<text transform="translate(75.5,369.0) rotate(-90)" font-size="26.1" text-anchor="middle" font-weight="bold">Magnitude</text>
<text x="53" y="703" font-size="23" text-anchor="start" font-weight="bold" >T0=30/09/2025 14:52:54.010009</text>
<text x="619" y="703" font-size="23" text-anchor="start" font-weight="bold" >Avg=3</text>
<rect x="39" y="86" width="389" height="30" fill="#000"/>
<rect x="41.5" y="83.5" width="388" height="30" fill="#f3f3f3" stroke="#000" stroke-width="1"/>
<text x="236.0" y="107.5" font-size="25" text-anchor="middle" font-weight="bold" >Transfer function</text>
<line x1="1438.5" x2="1438.5" y1="142" y2="595" stroke="#000" stroke-width="1" stroke-dasharray="1,2" shape-rendering="crispEdges"/>
<line x1="1697.5" x2="1697.5" y1="142" y2="595" stroke="#000" stroke-width="1" stroke-dasharray="1,2" shape-rendering="crispEdges"/>
<line x1="1956.5" x2="1956.5" y1="142" y2="595" stroke="#000" stroke-width="1" stroke-dasharray="1,2" shape-rendering="crispEdges"/>
<line x1="2215.5" x2="2215.5" y1="142" y2="595" stroke="#000" stroke-width="1" stroke-dasharray="1,2" shape-rendering="crispEdges"/>
<line x1="2474.5" x2="2474.5" y1="142" y2="595" stroke="#000" stroke-width="1" stroke-dasharray="1,2" shape-rendering="crispEdges"/>
<rect x="1438" y="579" width="1" height="17" fill="#000"/>
<rect x="1438" y="142" width="1" height="16" fill="#000"/>
<rect x="1516" y="587" width="1" height="9" fill="#000"/>
<rect x="1516" y="142" width="1" height="8" fill="#000"/>
<rect x="1562" y="587" width="1" height="9" fill="#000"/>
<rect x="1562" y="142" width="1" height="8" fill="#000"/>
<rect x="1594" y="587" width="1" height="9" fill="#000"/>
<rect x="1594" y="142" width="1" height="8" fill="#000"/>
<rect x="1619" y="587" width="1" height="9" fill="#000"/>
<rect x="1619" y="142" width="1" height="8" fill="#000"/>
<rect x="1640" y="587" width="1" height="9" fill="#000"/>
<rect x="1640" y="142" width="1" height="8" fill="#000"/>
<rect x="1657" y="587" width="1" height="9" fill="#000"/>
<rect x="1657" y="142" width="1" height="8" fill="#000"/>
<rect x="1672" y="587" width="1" height="9" fill="#000"/>
<rect x="1672" y="142" width="1" height="8" fill="#000"/>
<rect x="1685" y="587" width="1" height="9" fill="#000"/>
<rect x="1685" y="142" width="1" height="8" fill="#000"/>
<rect x="1697" y="579" width="1" height="17" fill="#000"/>
<rect x="1697" y="142" width="1" height="16" fill="#000"/>
<rect x="1775" y="587" width="1" height="9" fill="#000"/>
<rect x="1775" y="142" width="1" height="8" fill="#000"/>
<rect x="1821" y="587" width="1" height="9" fill="#000"/>
<rect x="1821" y="142" width="1" height="8" fill="#000"/>
<rect x="1853" y="587" width="1" height="9" fill="#000"/>
<rect x="1853" y="142" width="1" height="8" fill="#000"/>
<rect x="1878" y="587" width="1" height="9" fill="#000"/>
<rect x="1878" y="142" width="1" height="8" fill="#000"/>
<rect x="1899" y="587" width="1" height="9" fill="#000"/>
<rect x="1899" y="142" width="1" height="8" fill="#000"/>
<rect x="1916" y="587" width="1" height="9" fill="#000"/>
<rect x="1916" y="142" width="1" height="8" fill="#000"/>
<rect x="1931" y="587" width="1" height="9" fill="#000"/>
<rect x="1931" y="142" width="1" height="8" fill="#000"/>
<rect x="1944" y="587" width="1" height="9" fill="#000"/>
<rect x="1944" y="142" width="1" height="8" fill="#000"/>
<rect x="1956" y="579" width="1" height="17" fill="#000"/>
<rect x="1956" y="142" width="1" height="16" fill="#000"/>
<rect x="2034" y="587" width="1" height="9" fill="#000"/>
<rect x="2034" y="142" width="1" height="8" fill="#000"/>
<rect x="2080" y="587" width="1" height="9" fill="#000"/>
<rect x="2080" y="142" width="1" height="8" fill="#000"/>
<rect x="2112" y="587" width="1" height="9" fill="#000"/>
<rect x="2112" y="142" width="1" height="8" fill="#000"/>
<rect x="2137" y="587" width="1" height="9" fill="#000"/>
<rect x="2137" y="142" width="1" height="8" fill="#000"/>
<rect x="2158" y="587" width="1" height="9" fill="#000"/>
<rect x="2158" y="142" width="1" height="8" fill="#000"/>
<rect x="2175" y="587" width="1" height="9" fill="#000"/>
<rect x="2175" y="142" width="1" height="8" fill="#000"/>
<rect x="2190" y="587" width="1" height="9" fill="#000"/>
<rect x="2190" y="142" width="1" height="8" fill="#000"/>
<rect x="2203" y="587" width="1" height="9" fill="#000"/>
<rect x="2203" y="142" width="1" height="8" fill="#000"/>
<rect x="2215" y="579" width="1" height="17" fill="#000"/>
<rect x="2215" y="142" width="1" height="16" fill="#000"/>
<rect x="2293" y="587" width="1" height="9" fill="#000"/>
<rect x="2293" y="142" width="1" height="8" fill="#000"/>
<rect x="2339" y="587" width="1" height="9" fill="#000"/>
<rect x="2339" y="142" width="1" height="8" fill="#000"/>
<rect x="2371" y="587" width="1" height="9" fill="#000"/>
<rect x="2371" y="142" width="1" height="8" fill="#000"/>
<rect x="2396" y="587" width="1" height="9" fill="#000"/>
<rect x="2396" y="142" width="1" height="8" fill="#000"/>
<rect x="2417" y="587" width="1" height="9" fill="#000"/>
<rect x="2417" y="142" width="1" height="8" fill="#000"/>
<rect x="2434" y="587" width="1" height="9" fill="#000"/>
<rect x="2434" y="142" width="1" height="8" fill="#000"/>
<rect x="2449" y="587" width="1" height="9" fill="#000"/>
<rect x="2449" y="142" width="1" height="8" fill="#000"/>
<rect x="2462" y="587" width="1" height="9" fill="#000"/>
<rect x="2462" y="142" width="1" height="8" fill="#000"/>
<rect x="2474" y="579" width="1" height="17" fill="#000"/>
<rect x="2474" y="142" width="1" height="16" fill="#000"/>
<rect x="1426" y="142" width="1060" height="1" fill="#000"/>
<rect x="1426" y="595" width="1060" height="1" fill="#000"/>
<rect x="1426" y="142" width="1" height="454" fill="#000"/>
<rect x="2485" y="142" width="1" height="454" fill="#000"/>
<line x1="1428" x2="2485" y1="550.5" y2="550.5" stroke="#000" stroke-width="1" stroke-dasharray="1,2" shape-rendering="crispEdges"/>
<rect x="1426" y="550" width="27" height="1" fill="#000"/>
<rect x="2459" y="550" width="27" height="1" fill="#000"/>
<line x1="1428" x2="2485" y1="505.5" y2="505.5" stroke="#000" stroke-width="1" stroke-dasharray="1,2" shape-rendering="crispEdges"/>
<rect x="1426" y="505" width="27" height="1" fill="#000"/>
<rect x="2459" y="505" width="27" height="1" fill="#000"/>
<line x1="1428" x2="2485" y1="459.5" y2="459.5" stroke="#000" stroke-width="1" stroke-dasharray="1,2" shape-rendering="crispEdges"/>
<rect x="1426" y="459" width="27" height="1" fill="#000"/>
<rect x="2459" y="459" width="27" height="1" fill="#000"/>
<line x1="1428" x2="2485" y1="414.5" y2="414.5" stroke="#000" stroke-width="1" stroke-dasharray="1,2" shape-rendering="crispEdges"/>
<rect x="1426" y="414" width="27" height="1" fill="#000"/>
<rect x="2459" y="414" width="27" height="1" fill="#000"/>
<line x1="1428" x2="2485" y1="369.5" y2="369.5" stroke="#000" stroke-width="1" stroke-dasharray="1,2" shape-rendering="crispEdges"/>
<rect x="1426" y="369" width="27" height="1" fill="#000"/>
<rect x="2459" y="369" width="27" height="1" fill="#000"/>
<line x1="1428" x2="2485" y1="324.5" y2="324.5" stroke="#000" stroke-width="1" stroke-dasharray="1,2" shape-rendering="crispEdges"/>
<rect x="1426" y="324" width="27" height="1" fill="#000"/>
<rect x="2459" y="324" width="27" height="1" fill="#000"/>
<line x1="1428" x2="2485" y1="278.5" y2="278.5" stroke="#000" stroke-width="1" stroke-dasharray="1,2" shape-rendering="crispEdges"/>
<rect x="1426" y="278" width="27" height="1" fill="#000"/>
<rect x="2459" y="278" width="27" height="1" fill="#000"/>
<line x1="1428" x2="2485" y1="233.5" y2="233.5" stroke="#000" stroke-width="1" stroke-dasharray="1,2" shape-rendering="crispEdges"/>
<rect x="1426" y="233" width="27" height="1" fill="#000"/>
<rect x="2459" y="233" width="27" height="1" fill="#000"/>
<line x1="1428" x2="2485" y1="188.5" y2="188.5" stroke="#000" stroke-width="1" stroke-dasharray="1,2" shape-rendering="crispEdges"/>
<rect x="1426" y="188" width="27" height="1" fill="#000"/>
<rect x="2459" y="188" width="27" height="1" fill="#000"/>
<rect x="1426" y="586" width="14" height="1" fill="#000"/>
<rect x="2472" y="586" width="14" height="1" fill="#000"/>
<rect x="1426" y="577" width="14" height="1" fill="#000"/>
<rect x="2472" y="577" width="14" height="1" fill="#000"/>
<rect x="1426" y="568" width="14" height="1" fill="#000"/>
<rect x="2472" y="568" width="14" height="1" fill="#000"/>
<rect x="1426" y="559" width="14" height="1" fill="#000"/>
<rect x="2472" y="559" width="14" height="1" fill="#000"/>
<rect x="1426" y="541" width="14" height="1" fill="#000"/>
<rect x="2472" y="541" width="14" height="1" fill="#000"/>
<rect x="1426" y="532" width="14" height="1" fill="#000"/>
<rect x="2472" y="532" width="14" height="1" fill="#000"/>
<rect x="1426" y="523" width="14" height="1" fill="#000"/>
<rect x="2472" y="523" width="14" height="1" fill="#000"/>
<rect x="1426" y="514" width="14" height="1" fill="#000"/>
<rect x="2472" y="514" width="14" height="1" fill="#000"/>
<rect x="1426" y="496" width="14" height="1" fill="#000"/>
<rect x="2472" y="496" width="14" height="1" fill="#000"/>
<rect x="1426" y="486" width="14" height="1" fill="#000"/>
<rect x="2472" y="486" width="14" height="1" fill="#000"/>
<rect x="1426" y="477" width="14" height="1" fill="#000"/>
<rect x="2472" y="477" width="14" height="1" fill="#000"/>
<rect x="1426" y="468" width="14" height="1" fill="#000"/>
<rect x="2472" y="468" width="14" height="1" fill="#000"/>
<rect x="1426" y="450" width="14" height="1" fill="#000"/>
<rect x="2472" y="450" width="14" height="1" fill="#000"/>
<rect x="1426" y="441" width="14" height="1" fill="#000"/>
<rect x="2472" y="441" width="14" height="1" fill="#000"/>
<rect x="1426" y="432" width="14" height="1" fill="#000"/>
<rect x="2472" y="432" width="14" height="1" fill="#000"/>
<rect x="1426" y="423" width="14" height="1" fill="#000"/>
<rect x="2472" y="423" width="14" height="1" fill="#000"/>
<rect x="1426" y="405" width="14" height="1" fill="#000"/>
<rect x="2472" y="405" width="14" height="1" fill="#000"/>
<rect x="1426" y="396" width="14" height="1" fill="#000"/>
<rect x="2472" y="396" width="14" height="1" fill="#000"/>
<rect x="1426" y="387" width="14" height="1" fill="#000"/>
<rect x="2472" y="387" width="14" height="1" fill="#000"/>
<rect x="1426" y="378" width="14" height="1" fill="#000"/>
<rect x="2472" y="378" width="14" height="1" fill="#000"/>
<rect x="1426" y="360" width="14" height="1" fill="#000"/>
<rect x="2472" y="360" width="14" height="1" fill="#000"/>
<rect x="1426" y="351" width="14" height="1" fill="#000"/>
<rect x="2472" y="351" width="14" height="1" fill="#000"/>
<rect x="1426" y="342" width="14" height="1" fill="#000"/>
<rect x="2472" y="342" width="14" height="1" fill="#000"/>
<rect x="1426" y="333" width="14" height="1" fill="#000"/>
<rect x="2472" y="333" width="14" height="1" fill="#000"/>
<rect x="1426" y="315" width="14" height="1" fill="#000"/>
<rect x="2472" y="315" width="14" height="1" fill="#000"/>
<rect x="1426" y="306" width="14" height="1" fill="#000"/>
<rect x="2472" y="306" width="14" height="1" fill="#000"/>
<rect x="1426" y="297" width="14" height="1" fill="#000"/>
<rect x="2472" y="297" width="14" height="1" fill="#000"/>
<rect x="1426" y="288" width="14" height="1" fill="#000"/>
<rect x="2472" y="288" width="14" height="1" fill="#000"/>
<rect x="1426" y="269" width="14" height="1" fill="#000"/>
<rect x="2472" y="269" width="14" height="1" fill="#000"/>
<rect x="1426" y="260" width="14" height="1" fill="#000"/>
<rect x="2472" y="260" width="14" height="1" fill="#000"/>
<rect x="1426" y="251" width="14" height="1" fill="#000"/>
<rect x="2472" y="251" width="14" height="1" fill="#000"/>
<rect x="1426" y="242" width="14" height="1" fill="#000"/>
<rect x="2472" y="242" width="14" height="1" fill="#000"/>
<rect x="1426" y="224" width="14" height="1" fill="#000"/>
<rect x="2472" y="224" width="14" height="1" fill="#000"/>
<rect x="1426" y="215" width="14" height="1" fill="#000"/>
<rect x="2472" y="215" width="14" height="1" fill="#000"/>
<rect x="1426" y="206" width="14" height="1" fill="#000"/>
<rect x="2472" y="206" width="14" height="1" fill="#000"/>
<rect x="1426" y="197" width="14" height="1" fill="#000"/>
<rect x="2472" y="197" width="14" height="1" fill="#000"/>
<rect x="1426" y="179" width="14" height="1" fill="#000"/>
<rect x="2472" y="179" width="14" height="1" fill="#000"/>
<rect x="1426" y="170" width="14" height="1" fill="#000"/>
<rect x="2472" y="170" width="14" height="1" fill="#000"/>
<rect x="1426" y="161" width="14" height="1" fill="#000"/>
<rect x="2472" y="161" width="14" height="1" fill="#000"/>
<rect x="1426" y="152" width="14" height="1" fill="#000"/>
<rect x="2472" y="152" width="14" height="1" fill="#000"/>
<polyline points="1438.5,389.0 1456.7,378.9 1474.9,582.0 1493.0,238.3 1511.2,538.5 1529.4,327.3 1547.6,509.0 1565.8,401.5 1583.9,446.7 1602.1,433.1 1620.3,540.1 1638.5,525.8 1656.7,489.5 1674.8,570.0 1693.0,453.1 1711.2,593.6 1729.4,501.0 1747.6,446.7 1765.7,548.1 1783.9,501.0 1802.1,474.6 1820.3,489.8 1838.5,391.0 1856.6,509.8 1874.8,483.4 1893.0,520.5 1911.2,516.2 1929.4,519.8 1947.5,542.5 1965.7,582.0 1983.9,553.0 2002.1,300.8 2020.3,523.4 2038.4,537.4 2056.6,214.4 2074.8,559.3 2093.0,501.8 2111.2,540.6 2129.3,551.3 2147.5,333.0 2165.7,207.0 2183.9,562.5 2202.1,204.0 2220.2,432.0 2238.4,300.2 2256.6,309.2 2274.8,427.5 2293.0,274.8 2311.1,520.5 2329.3,412.3 2347.5,378.8 2365.7,586.5 2383.9,560.1 2402.0,585.7 2420.2,459.5 2438.4,280.4 2456.6,570.0 2474.8,436.5" fill="none" stroke="#ff0000" stroke-width="2" shape-rendering="crispEdges" stroke-linejoin="bevel"/>
<rect x="1456" y="584" width="564" height="3" fill="#000"/>
<rect x="2017" y="555" width="3" height="32" fill="#000"/>
<rect x="1451.5" y="550.5" width="565" height="33" fill="#fff" stroke="#000" stroke-width="1"/>
<rect x="1472" y="565" width="99" height="2" fill="#ff0000"/>
<text x="1593" y="573.78" font-size="18" text-anchor="start" font-weight="bold" >H1:IMC-DOF_2_P_IN1 / H1:IMC-DOF_2_Y_IN2</text>
<text transform="translate(1438.0,627) scale(1,1.06)" font-size="23" text-anchor="middle" font-weight="bold" >10<tspan font-size="16.1" dy="-10.3">-1</tspan></text>
<text transform="translate(1697.0,627) scale(1,1.06)" font-size="23" text-anchor="middle" font-weight="bold" >1</text>
<text transform="translate(1956.5,627) scale(1,1.06)" font-size="23" text-anchor="middle" font-weight="bold" >10</text>
<text transform="translate(2214.5,627) scale(1,1.06)" font-size="23" text-anchor="middle" font-weight="bold" >10<tspan font-size="16.1" dy="-10.3">2</tspan></text>
<text transform="translate(2473.5,627) scale(1,1.06)" font-size="23" text-anchor="middle" font-weight="bold" >10<tspan font-size="16.1" dy="-10.3">3</tspan></text>
<text transform="translate(1419.8,604.3) scale(1,1.06)" font-size="23" text-anchor="end" font-weight="bold" >0</text>
<text transform="translate(1419.8,559.0799999999999) scale(1,1.06)" font-size="23" text-anchor="end" font-weight="bold" >0.1</text>
<text transform="translate(1419.8,513.86) scale(1,1.06)" font-size="23" text-anchor="end" font-weight="bold" >0.2</text>
<text transform="translate(1419.8,468.64000000000004) scale(1,1.06)" font-size="23" text-anchor="end" font-weight="bold" >0.3</text>
<text transform="translate(1419.8,423.42) scale(1,1.06)" font-size="23" text-anchor="end" font-weight="bold" >0.4</text>
<text transform="translate(1419.8,378.2) scale(1,1.06)" font-size="23" text-anchor="end" font-weight="bold" >0.5</text>
<text transform="translate(1419.8,332.98) scale(1,1.06)" font-size="23" text-anchor="end" font-weight="bold" >0.6</text>
<text transform="translate(1419.8,287.76000000000005) scale(1,1.06)" font-size="23" text-anchor="end" font-weight="bold" >0.7</text>
<text transform="translate(1419.8,242.54000000000002) scale(1,1.06)" font-size="23" text-anchor="end" font-weight="bold" >0.8</text>
<text transform="translate(1419.8,197.32) scale(1,1.06)" font-size="23" text-anchor="end" font-weight="bold" >0.9</text>
<text transform="translate(1421.3,152.10000000000002) scale(1,1.06)" font-size="23" text-anchor="end" font-weight="bold" >1</text>
<text x="1956.5" y="661" font-size="25" text-anchor="middle" font-weight="bold" >Frequency (Hz)</text>
<text transform="translate(1350.0,369.0) rotate(-90)" font-size="26.1" text-anchor="middle" font-weight="bold">Coherence</text>
<text x="1326" y="703" font-size="23" text-anchor="start" font-weight="bold" >T0=30/09/2025 14:52:54.010009</text>
<text x="1892" y="703" font-size="23" text-anchor="start" font-weight="bold" >Avg=3</text>
<rect x="1312" y="86" width="377" height="30" fill="#000"/>
<rect x="1314.5" y="83.5" width="376" height="30" fill="#f3f3f3" stroke="#000" stroke-width="1"/>
<text x="1503.0" y="107.5" font-size="25" text-anchor="middle" font-weight="bold" >Coherence function</text>
<line x1="165.5" x2="165.5" y1="780" y2="1233" stroke="#000" stroke-width="1" stroke-dasharray="1,2" shape-rendering="crispEdges"/>
<line x1="424.5" x2="424.5" y1="780" y2="1233" stroke="#000" stroke-width="1" stroke-dasharray="1,2" shape-rendering="crispEdges"/>
<line x1="683.5" x2="683.5" y1="780" y2="1233" stroke="#000" stroke-width="1" stroke-dasharray="1,2" shape-rendering="crispEdges"/>
<line x1="942.5" x2="942.5" y1="780" y2="1233" stroke="#000" stroke-width="1" stroke-dasharray="1,2" shape-rendering="crispEdges"/>
<line x1="1201.5" x2="1201.5" y1="780" y2="1233" stroke="#000" stroke-width="1" stroke-dasharray="1,2" shape-rendering="crispEdges"/>
<rect x="165" y="1217" width="1" height="17" fill="#000"/>
<rect x="165" y="780" width="1" height="16" fill="#000"/>
<rect x="243" y="1225" width="1" height="9" fill="#000"/>
<rect x="243" y="780" width="1" height="8" fill="#000"/>
<rect x="289" y="1225" width="1" height="9" fill="#000"/>
<rect x="289" y="780" width="1" height="8" fill="#000"/>
<rect x="321" y="1225" width="1" height="9" fill="#000"/>
<rect x="321" y="780" width="1" height="8" fill="#000"/>
<rect x="346" y="1225" width="1" height="9" fill="#000"/>
<rect x="346" y="780" width="1" height="8" fill="#000"/>
<rect x="367" y="1225" width="1" height="9" fill="#000"/>
<rect x="367" y="780" width="1" height="8" fill="#000"/>
<rect x="384" y="1225" width="1" height="9" fill="#000"/>
<rect x="384" y="780" width="1" height="8" fill="#000"/>
<rect x="399" y="1225" width="1" height="9" fill="#000"/>
<rect x="399" y="780" width="1" height="8" fill="#000"/>
<rect x="412" y="1225" width="1" height="9" fill="#000"/>
<rect x="412" y="780" width="1" height="8" fill="#000"/>
<rect x="424" y="1217" width="1" height="17" fill="#000"/>
<rect x="424" y="780" width="1" height="16" fill="#000"/>
<rect x="502" y="1225" width="1" height="9" fill="#000"/>
<rect x="502" y="780" width="1" height="8" fill="#000"/>
<rect x="548" y="1225" width="1" height="9" fill="#000"/>
<rect x="548" y="780" width="1" height="8" fill="#000"/>
<rect x="580" y="1225" width="1" height="9" fill="#000"/>
<rect x="580" y="780" width="1" height="8" fill="#000"/>
<rect x="605" y="1225" width="1" height="9" fill="#000"/>
<rect x="605" y="780" width="1" height="8" fill="#000"/>
<rect x="626" y="1225" width="1" height="9" fill="#000"/>
<rect x="626" y="780" width="1" height="8" fill="#000"/>
<rect x="643" y="1225" width="1" height="9" fill="#000"/>
<rect x="643" y="780" width="1" height="8" fill="#000"/>
<rect x="658" y="1225" width="1" height="9" fill="#000"/>
<rect x="658" y="780" width="1" height="8" fill="#000"/>
<rect x="671" y="1225" width="1" height="9" fill="#000"/>
<rect x="671" y="780" width="1" height="8" fill="#000"/>
<rect x="683" y="1217" width="1" height="17" fill="#000"/>
<rect x="683" y="780" width="1" height="16" fill="#000"/>
<rect x="761" y="1225" width="1" height="9" fill="#000"/>
<rect x="761" y="780" width="1" height="8" fill="#000"/>
<rect x="807" y="1225" width="1" height="9" fill="#000"/>
<rect x="807" y="780" width="1" height="8" fill="#000"/>
<rect x="839" y="1225" width="1" height="9" fill="#000"/>
<rect x="839" y="780" width="1" height="8" fill="#000"/>
<rect x="864" y="1225" width="1" height="9" fill="#000"/>
<rect x="864" y="780" width="1" height="8" fill="#000"/>
<rect x="885" y="1225" width="1" height="9" fill="#000"/>
<rect x="885" y="780" width="1" height="8" fill="#000"/>
<rect x="902" y="1225" width="1" height="9" fill="#000"/>
<rect x="902" y="780" width="1" height="8" fill="#000"/>
<rect x="917" y="1225" width="1" height="9" fill="#000"/>
<rect x="917" y="780" width="1" height="8" fill="#000"/>
<rect x="930" y="1225" width="1" height="9" fill="#000"/>
<rect x="930" y="780" width="1" height="8" fill="#000"/>
<rect x="942" y="1217" width="1" height="17" fill="#000"/>
<rect x="942" y="780" width="1" height="16" fill="#000"/>
<rect x="1020" y="1225" width="1" height="9" fill="#000"/>
<rect x="1020" y="780" width="1" height="8" fill="#000"/>
<rect x="1066" y="1225" width="1" height="9" fill="#000"/>
<rect x="1066" y="780" width="1" height="8" fill="#000"/>
<rect x="1098" y="1225" width="1" height="9" fill="#000"/>
<rect x="1098" y="780" width="1" height="8" fill="#000"/>
<rect x="1123" y="1225" width="1" height="9" fill="#000"/>
<rect x="1123" y="780" width="1" height="8" fill="#000"/>
<rect x="1144" y="1225" width="1" height="9" fill="#000"/>
<rect x="1144" y="780" width="1" height="8" fill="#000"/>
<rect x="1161" y="1225" width="1" height="9" fill="#000"/>
<rect x="1161" y="780" width="1" height="8" fill="#000"/>
<rect x="1176" y="1225" width="1" height="9" fill="#000"/>
<rect x="1176" y="780" width="1" height="8" fill="#000"/>
<rect x="1189" y="1225" width="1" height="9" fill="#000"/>
<rect x="1189" y="780" width="1" height="8" fill="#000"/>
<rect x="1201" y="1217" width="1" height="17" fill="#000"/>
<rect x="1201" y="780" width="1" height="16" fill="#000"/>
<rect x="153" y="780" width="1060" height="1" fill="#000"/>
<rect x="153" y="1233" width="1060" height="1" fill="#000"/>
<rect x="153" y="780" width="1" height="454" fill="#000"/>
<rect x="1212" y="780" width="1" height="454" fill="#000"/>
<line x1="155" x2="1212" y1="1225.5" y2="1225.5" stroke="#000" stroke-width="1" stroke-dasharray="1,2" shape-rendering="crispEdges"/>
<rect x="153" y="1225" width="27" height="1" fill="#000"/>
<rect x="1186" y="1225" width="27" height="1" fill="#000"/>
<line x1="155" x2="1212" y1="1172.5" y2="1172.5" stroke="#000" stroke-width="1" stroke-dasharray="1,2" shape-rendering="crispEdges"/>
<rect x="153" y="1172" width="27" height="1" fill="#000"/>
<rect x="1186" y="1172" width="27" height="1" fill="#000"/>
<line x1="155" x2="1212" y1="1118.5" y2="1118.5" stroke="#000" stroke-width="1" stroke-dasharray="1,2" shape-rendering="crispEdges"/>
<rect x="153" y="1118" width="27" height="1" fill="#000"/>
<rect x="1186" y="1118" width="27" height="1" fill="#000"/>
<line x1="155" x2="1212" y1="1064.5" y2="1064.5" stroke="#000" stroke-width="1" stroke-dasharray="1,2" shape-rendering="crispEdges"/>
<rect x="153" y="1064" width="27" height="1" fill="#000"/>
<rect x="1186" y="1064" width="27" height="1" fill="#000"/>
<line x1="155" x2="1212" y1="1010.5" y2="1010.5" stroke="#000" stroke-width="1" stroke-dasharray="1,2" shape-rendering="crispEdges"/>
<rect x="153" y="1010" width="27" height="1" fill="#000"/>
<rect x="1186" y="1010" width="27" height="1" fill="#000"/>
<line x1="155" x2="1212" y1="956.5" y2="956.5" stroke="#000" stroke-width="1" stroke-dasharray="1,2" shape-rendering="crispEdges"/>
<rect x="153" y="956" width="27" height="1" fill="#000"/>
<rect x="1186" y="956" width="27" height="1" fill="#000"/>
<line x1="155" x2="1212" y1="902.5" y2="902.5" stroke="#000" stroke-width="1" stroke-dasharray="1,2" shape-rendering="crispEdges"/>
<rect x="153" y="902" width="27" height="1" fill="#000"/>
<rect x="1186" y="902" width="27" height="1" fill="#000"/>
<line x1="155" x2="1212" y1="848.5" y2="848.5" stroke="#000" stroke-width="1" stroke-dasharray="1,2" shape-rendering="crispEdges"/>
<rect x="153" y="848" width="27" height="1" fill="#000"/>
<rect x="1186" y="848" width="27" height="1" fill="#000"/>
<line x1="155" x2="1212" y1="795.5" y2="795.5" stroke="#000" stroke-width="1" stroke-dasharray="1,2" shape-rendering="crispEdges"/>
<rect x="153" y="795" width="27" height="1" fill="#000"/>
<rect x="1186" y="795" width="27" height="1" fill="#000"/>
<rect x="153" y="1215" width="14" height="1" fill="#000"/>
<rect x="1199" y="1215" width="14" height="1" fill="#000"/>
<rect x="153" y="1204" width="14" height="1" fill="#000"/>
<rect x="1199" y="1204" width="14" height="1" fill="#000"/>
<rect x="153" y="1193" width="14" height="1" fill="#000"/>
<rect x="1199" y="1193" width="14" height="1" fill="#000"/>
<rect x="153" y="1182" width="14" height="1" fill="#000"/>
<rect x="1199" y="1182" width="14" height="1" fill="#000"/>
<rect x="153" y="1161" width="14" height="1" fill="#000"/>
<rect x="1199" y="1161" width="14" height="1" fill="#000"/>
<rect x="153" y="1150" width="14" height="1" fill="#000"/>
<rect x="1199" y="1150" width="14" height="1" fill="#000"/>
<rect x="153" y="1139" width="14" height="1" fill="#000"/>
<rect x="1199" y="1139" width="14" height="1" fill="#000"/>
<rect x="153" y="1128" width="14" height="1" fill="#000"/>
<rect x="1199" y="1128" width="14" height="1" fill="#000"/>
<rect x="153" y="1107" width="14" height="1" fill="#000"/>
<rect x="1199" y="1107" width="14" height="1" fill="#000"/>
<rect x="153" y="1096" width="14" height="1" fill="#000"/>
<rect x="1199" y="1096" width="14" height="1" fill="#000"/>
<rect x="153" y="1085" width="14" height="1" fill="#000"/>
<rect x="1199" y="1085" width="14" height="1" fill="#000"/>
<rect x="153" y="1075" width="14" height="1" fill="#000"/>
<rect x="1199" y="1075" width="14" height="1" fill="#000"/>
<rect x="153" y="1053" width="14" height="1" fill="#000"/>
<rect x="1199" y="1053" width="14" height="1" fill="#000"/>
<rect x="153" y="1042" width="14" height="1" fill="#000"/>
<rect x="1199" y="1042" width="14" height="1" fill="#000"/>
<rect x="153" y="1032" width="14" height="1" fill="#000"/>
<rect x="1199" y="1032" width="14" height="1" fill="#000"/>
<rect x="153" y="1021" width="14" height="1" fill="#000"/>
<rect x="1199" y="1021" width="14" height="1" fill="#000"/>
<rect x="153" y="999" width="14" height="1" fill="#000"/>
<rect x="1199" y="999" width="14" height="1" fill="#000"/>
<rect x="153" y="988" width="14" height="1" fill="#000"/>
<rect x="1199" y="988" width="14" height="1" fill="#000"/>
<rect x="153" y="978" width="14" height="1" fill="#000"/>
<rect x="1199" y="978" width="14" height="1" fill="#000"/>
<rect x="153" y="967" width="14" height="1" fill="#000"/>
<rect x="1199" y="967" width="14" height="1" fill="#000"/>
<rect x="153" y="945" width="14" height="1" fill="#000"/>
<rect x="1199" y="945" width="14" height="1" fill="#000"/>
<rect x="153" y="935" width="14" height="1" fill="#000"/>
<rect x="1199" y="935" width="14" height="1" fill="#000"/>
<rect x="153" y="924" width="14" height="1" fill="#000"/>
<rect x="1199" y="924" width="14" height="1" fill="#000"/>
<rect x="153" y="913" width="14" height="1" fill="#000"/>
<rect x="1199" y="913" width="14" height="1" fill="#000"/>
<rect x="153" y="892" width="14" height="1" fill="#000"/>
<rect x="1199" y="892" width="14" height="1" fill="#000"/>
<rect x="153" y="881" width="14" height="1" fill="#000"/>
<rect x="1199" y="881" width="14" height="1" fill="#000"/>
<rect x="153" y="870" width="14" height="1" fill="#000"/>
<rect x="1199" y="870" width="14" height="1" fill="#000"/>
<rect x="153" y="859" width="14" height="1" fill="#000"/>
<rect x="1199" y="859" width="14" height="1" fill="#000"/>
<rect x="153" y="838" width="14" height="1" fill="#000"/>
<rect x="1199" y="838" width="14" height="1" fill="#000"/>
<rect x="153" y="827" width="14" height="1" fill="#000"/>
<rect x="1199" y="827" width="14" height="1" fill="#000"/>
<rect x="153" y="816" width="14" height="1" fill="#000"/>
<rect x="1199" y="816" width="14" height="1" fill="#000"/>
<rect x="153" y="805" width="14" height="1" fill="#000"/>
<rect x="1199" y="805" width="14" height="1" fill="#000"/>
<rect x="153" y="784" width="14" height="1" fill="#000"/>
<rect x="1199" y="784" width="14" height="1" fill="#000"/>
<polyline points="165.5,927.4 183.7,926.2 201.9,934.2 220.0,940.5 238.2,942.5 256.4,950.6 274.6,952.5 292.8,962.6 310.9,970.4 329.1,984.5 347.3,1003.0 365.5,1016.5 383.7,1039.3 401.8,1078.5 420.0,1169.2 438.2,901.7 456.4,987.7 474.6,893.4 492.7,1121.3 510.9,1034.2 529.1,1013.3 547.3,1029.4 565.5,858.6 583.6,912.3 601.8,1110.4 620.0,1147.5 638.2,919.8 656.4,984.5 674.5,1148.3 692.7,1115.2 710.9,931.4 729.1,956.5 747.3,1046.5 765.4,1196.2 783.6,1009.3 801.8,1159.2 820.0,1030.1 838.2,1078.5 856.3,1024.5 874.5,1095.6 892.7,892.6 910.9,833.0 929.1,995.7 947.2,939.4 965.4,994.4 983.6,1153.6 1001.8,994.4 1020.0,1111.2 1038.1,1090.8 1056.3,861.0 1074.5,860.0 1092.7,971.2 1110.9,1002.0 1129.0,964.5 1147.2,985.3 1165.4,885.4 1183.6,997.3 1201.8,911.8" fill="none" stroke="#0000ff" stroke-width="1" shape-rendering="crispEdges" stroke-linejoin="bevel"/>
<rect x="165" y="1009" width="10" height="1" fill="#00ff00"/>
<rect x="175" y="1010" width="1017" height="1" fill="#00ff00"/>
<rect x="1192" y="1009" width="10" height="1" fill="#00ff00"/>
<polyline points="165.5,1091.3 183.7,1054.5 201.9,1112.3 220.0,1085.4 238.2,1122.4 256.4,1169.5 274.6,1192.2 292.8,823.5 310.9,819.1 329.1,845.0 347.3,871.1 365.5,879.5 383.7,937.3 401.8,1014.1 420.0,1077.7 438.2,836.2 456.4,870.7 474.6,929.8 492.7,1149.2 510.9,887.0 529.1,866.3 547.3,929.0 565.5,1163.9 583.6,952.5 601.8,1012.2 620.0,938.1 638.2,1029.3 656.4,932.2 674.5,1055.0 692.7,1182.0 710.9,887.3 729.1,934.6 747.3,891.3 765.4,956.0 783.6,1048.5 801.8,1190.3 820.0,1129.9 838.2,917.0 856.3,1175.1 874.5,1010.6 892.7,994.9 910.9,1083.0 929.1,855.0 947.2,1101.0 965.4,817.0 983.6,945.3 1001.8,870.0 1020.0,1131.2 1038.1,1033.8 1056.3,1186.3 1074.5,891.8 1092.7,977.3 1110.9,986.0 1129.0,1119.2 1147.2,1113.3 1165.4,855.0 1183.6,835.0 1201.8,877.4" fill="none" stroke="#876657" stroke-width="1" shape-rendering="crispEdges" stroke-linejoin="bevel"/>
<path d="M161.5,1088.5 h8.0 L165.5,1096.0 z" fill="#876657" shape-rendering="crispEdges"/>
<path d="M179.5,1051.5 h8.0 L183.5,1059.0 z" fill="#876657" shape-rendering="crispEdges"/>
<path d="M197.5,1109.5 h8.0 L201.5,1117.0 z" fill="#876657" shape-rendering="crispEdges"/>
<path d="M216.5,1082.5 h8.0 L220.5,1090.0 z" fill="#876657" shape-rendering="crispEdges"/>
<path d="M234.5,1119.5 h8.0 L238.5,1127.0 z" fill="#876657" shape-rendering="crispEdges"/>
<path d="M252.5,1166.5 h8.0 L256.5,1174.0 z" fill="#876657" shape-rendering="crispEdges"/>
<path d="M270.5,1189.5 h8.0 L274.5,1197.0 z" fill="#876657" shape-rendering="crispEdges"/>
<path d="M288.5,820.5 h8.0 L292.5,828.0 z" fill="#876657" shape-rendering="crispEdges"/>
<path d="M306.5,816.5 h8.0 L310.5,824.0 z" fill="#876657" shape-rendering="crispEdges"/>
<path d="M325.5,842.5 h8.0 L329.5,850.0 z" fill="#876657" shape-rendering="crispEdges"/>
<path d="M343.5,868.5 h8.0 L347.5,876.0 z" fill="#876657" shape-rendering="crispEdges"/>
<path d="M361.5,876.5 h8.0 L365.5,884.0 z" fill="#876657" shape-rendering="crispEdges"/>
<path d="M379.5,934.5 h8.0 L383.5,942.0 z" fill="#876657" shape-rendering="crispEdges"/>
<path d="M397.5,1011.5 h8.0 L401.5,1019.0 z" fill="#876657" shape-rendering="crispEdges"/>
<path d="M416.5,1075.5 h8.0 L420.5,1083.0 z" fill="#876657" shape-rendering="crispEdges"/>
<path d="M434.5,833.5 h8.0 L438.5,841.0 z" fill="#876657" shape-rendering="crispEdges"/>
<path d="M452.5,868.5 h8.0 L456.5,876.0 z" fill="#876657" shape-rendering="crispEdges"/>
<path d="M470.5,927.5 h8.0 L474.5,935.0 z" fill="#876657" shape-rendering="crispEdges"/>
<path d="M488.5,1146.5 h8.0 L492.5,1154.0 z" fill="#876657" shape-rendering="crispEdges"/>
<path d="M506.5,884.5 h8.0 L510.5,892.0 z" fill="#876657" shape-rendering="crispEdges"/>
<path d="M525.5,863.5 h8.0 L529.5,871.0 z" fill="#876657" shape-rendering="crispEdges"/>
<path d="M543.5,926.5 h8.0 L547.5,934.0 z" fill="#876657" shape-rendering="crispEdges"/>
<path d="M561.5,1161.5 h8.0 L565.5,1169.0 z" fill="#876657" shape-rendering="crispEdges"/>
<path d="M579.5,949.5 h8.0 L583.5,957.0 z" fill="#876657" shape-rendering="crispEdges"/>
<path d="M597.5,1009.5 h8.0 L601.5,1017.0 z" fill="#876657" shape-rendering="crispEdges"/>
<path d="M616.5,935.5 h8.0 L620.5,943.0 z" fill="#876657" shape-rendering="crispEdges"/>
<path d="M634.5,1026.5 h8.0 L638.5,1034.0 z" fill="#876657" shape-rendering="crispEdges"/>
<path d="M652.5,929.5 h8.0 L656.5,937.0 z" fill="#876657" shape-rendering="crispEdges"/>
<path d="M670.5,1052.5 h8.0 L674.5,1060.0 z" fill="#876657" shape-rendering="crispEdges"/>
<path d="M688.5,1179.5 h8.0 L692.5,1187.0 z" fill="#876657" shape-rendering="crispEdges"/>
<path d="M706.5,884.5 h8.0 L710.5,892.0 z" fill="#876657" shape-rendering="crispEdges"/>
<path d="M725.5,932.5 h8.0 L729.5,940.0 z" fill="#876657" shape-rendering="crispEdges"/>
<path d="M743.5,888.5 h8.0 L747.5,896.0 z" fill="#876657" shape-rendering="crispEdges"/>
<path d="M761.5,953.5 h8.0 L765.5,961.0 z" fill="#876657" shape-rendering="crispEdges"/>
<path d="M779.5,1045.5 h8.0 L783.5,1053.0 z" fill="#876657" shape-rendering="crispEdges"/>
<path d="M797.5,1187.5 h8.0 L801.5,1195.0 z" fill="#876657" shape-rendering="crispEdges"/>
<path d="M815.5,1127.5 h8.0 L819.5,1135.0 z" fill="#876657" shape-rendering="crispEdges"/>
<path d="M834.5,914.5 h8.0 L838.5,922.0 z" fill="#876657" shape-rendering="crispEdges"/>
<path d="M852.5,1172.5 h8.0 L856.5,1180.0 z" fill="#876657" shape-rendering="crispEdges"/>
<path d="M870.5,1008.5 h8.0 L874.5,1016.0 z" fill="#876657" shape-rendering="crispEdges"/>
<path d="M888.5,992.5 h8.0 L892.5,1000.0 z" fill="#876657" shape-rendering="crispEdges"/>
<path d="M906.5,1080.5 h8.0 L910.5,1088.0 z" fill="#876657" shape-rendering="crispEdges"/>
<path d="M925.5,852.5 h8.0 L929.5,860.0 z" fill="#876657" shape-rendering="crispEdges"/>
<path d="M943.5,1098.5 h8.0 L947.5,1106.0 z" fill="#876657" shape-rendering="crispEdges"/>
<path d="M961.5,814.5 h8.0 L965.5,822.0 z" fill="#876657" shape-rendering="crispEdges"/>
<path d="M979.5,942.5 h8.0 L983.5,950.0 z" fill="#876657" shape-rendering="crispEdges"/>
<path d="M997.5,867.5 h8.0 L1001.5,875.0 z" fill="#876657" shape-rendering="crispEdges"/>
<path d="M1015.5,1128.5 h8.0 L1019.5,1136.0 z" fill="#876657" shape-rendering="crispEdges"/>
<path d="M1034.5,1031.5 h8.0 L1038.5,1039.0 z" fill="#876657" shape-rendering="crispEdges"/>
<path d="M1052.5,1183.5 h8.0 L1056.5,1191.0 z" fill="#876657" shape-rendering="crispEdges"/>
<path d="M1070.5,889.5 h8.0 L1074.5,897.0 z" fill="#876657" shape-rendering="crispEdges"/>
<path d="M1088.5,974.5 h8.0 L1092.5,982.0 z" fill="#876657" shape-rendering="crispEdges"/>
<path d="M1106.5,983.5 h8.0 L1110.5,991.0 z" fill="#876657" shape-rendering="crispEdges"/>
<path d="M1125.5,1116.5 h8.0 L1129.5,1124.0 z" fill="#876657" shape-rendering="crispEdges"/>
<path d="M1143.5,1110.5 h8.0 L1147.5,1118.0 z" fill="#876657" shape-rendering="crispEdges"/>
<path d="M1161.5,852.5 h8.0 L1165.5,860.0 z" fill="#876657" shape-rendering="crispEdges"/>
<path d="M1179.5,832.5 h8.0 L1183.5,840.0 z" fill="#876657" shape-rendering="crispEdges"/>
<path d="M1197.5,874.5 h8.0 L1201.5,882.0 z" fill="#876657" shape-rendering="crispEdges"/>
<polyline points="165.5,928.2 183.7,927.0 201.9,935.0 220.0,941.3 238.2,943.3 256.4,951.4 274.6,953.3 292.8,963.4 310.9,971.2 329.1,984.5 347.3,1003.0 365.5,1016.5 383.7,1039.3 401.8,1078.5 420.0,1169.2 438.2,901.7 456.4,987.7 474.6,893.4 492.7,1121.3 510.9,1034.2 529.1,1013.3 547.3,1029.4 565.5,858.6 583.6,912.3 601.8,1110.4 620.0,1147.5 638.2,919.8 656.4,984.5 674.5,1148.3 692.7,1115.2 710.9,931.4 729.1,956.5 747.3,1046.5 765.4,1196.2 783.6,1009.3 801.8,1159.2 820.0,1030.1 838.2,1078.5 856.3,1024.5 874.5,1095.6 892.7,892.6 910.9,833.0 929.1,995.7 947.2,939.4 965.4,994.4 983.6,1153.6 1001.8,994.4 1020.0,1111.2 1038.1,1090.8 1056.3,861.0 1074.5,860.0 1092.7,971.2 1110.9,1002.0 1129.0,964.5 1147.2,985.3 1165.4,885.4 1183.6,997.3 1201.8,911.8" fill="none" stroke="#ff0000" stroke-width="1" shape-rendering="crispEdges" stroke-linejoin="bevel"/>
<path d="M164.0,925.0 h3 l2,2 v3 l-2,2 h-3 l-2,-2 v-3 z" fill="#ff0000" shape-rendering="crispEdges"/>
<path d="M182.0,924.0 h3 l2,2 v3 l-2,2 h-3 l-2,-2 v-3 z" fill="#ff0000" shape-rendering="crispEdges"/>
<path d="M200.0,932.0 h3 l2,2 v3 l-2,2 h-3 l-2,-2 v-3 z" fill="#ff0000" shape-rendering="crispEdges"/>
<path d="M219.0,938.0 h3 l2,2 v3 l-2,2 h-3 l-2,-2 v-3 z" fill="#ff0000" shape-rendering="crispEdges"/>
<path d="M237.0,940.0 h3 l2,2 v3 l-2,2 h-3 l-2,-2 v-3 z" fill="#ff0000" shape-rendering="crispEdges"/>
<path d="M255.0,948.0 h3 l2,2 v3 l-2,2 h-3 l-2,-2 v-3 z" fill="#ff0000" shape-rendering="crispEdges"/>
<path d="M273.0,950.0 h3 l2,2 v3 l-2,2 h-3 l-2,-2 v-3 z" fill="#ff0000" shape-rendering="crispEdges"/>
<path d="M291.0,960.0 h3 l2,2 v3 l-2,2 h-3 l-2,-2 v-3 z" fill="#ff0000" shape-rendering="crispEdges"/>
<path d="M309.0,968.0 h3 l2,2 v3 l-2,2 h-3 l-2,-2 v-3 z" fill="#ff0000" shape-rendering="crispEdges"/>
<path d="M328.0,981.0 h3 l2,2 v3 l-2,2 h-3 l-2,-2 v-3 z" fill="#ff0000" shape-rendering="crispEdges"/>
<path d="M346.0,1000.0 h3 l2,2 v3 l-2,2 h-3 l-2,-2 v-3 z" fill="#ff0000" shape-rendering="crispEdges"/>
<path d="M364.0,1013.0 h3 l2,2 v3 l-2,2 h-3 l-2,-2 v-3 z" fill="#ff0000" shape-rendering="crispEdges"/>
<path d="M382.0,1036.0 h3 l2,2 v3 l-2,2 h-3 l-2,-2 v-3 z" fill="#ff0000" shape-rendering="crispEdges"/>
<path d="M400.0,1075.0 h3 l2,2 v3 l-2,2 h-3 l-2,-2 v-3 z" fill="#ff0000" shape-rendering="crispEdges"/>
<path d="M419.0,1166.0 h3 l2,2 v3 l-2,2 h-3 l-2,-2 v-3 z" fill="#ff0000" shape-rendering="crispEdges"/>
<path d="M437.0,898.0 h3 l2,2 v3 l-2,2 h-3 l-2,-2 v-3 z" fill="#ff0000" shape-rendering="crispEdges"/>
<path d="M455.0,984.0 h3 l2,2 v3 l-2,2 h-3 l-2,-2 v-3 z" fill="#ff0000" shape-rendering="crispEdges"/>
<path d="M473.0,890.0 h3 l2,2 v3 l-2,2 h-3 l-2,-2 v-3 z" fill="#ff0000" shape-rendering="crispEdges"/>
<path d="M491.0,1118.0 h3 l2,2 v3 l-2,2 h-3 l-2,-2 v-3 z" fill="#ff0000" shape-rendering="crispEdges"/>
<path d="M509.0,1031.0 h3 l2,2 v3 l-2,2 h-3 l-2,-2 v-3 z" fill="#ff0000" shape-rendering="crispEdges"/>
<path d="M528.0,1010.0 h3 l2,2 v3 l-2,2 h-3 l-2,-2 v-3 z" fill="#ff0000" shape-rendering="crispEdges"/>
<path d="M546.0,1026.0 h3 l2,2 v3 l-2,2 h-3 l-2,-2 v-3 z" fill="#ff0000" shape-rendering="crispEdges"/>
<path d="M564.0,855.0 h3 l2,2 v3 l-2,2 h-3 l-2,-2 v-3 z" fill="#ff0000" shape-rendering="crispEdges"/>
<path d="M582.0,909.0 h3 l2,2 v3 l-2,2 h-3 l-2,-2 v-3 z" fill="#ff0000" shape-rendering="crispEdges"/>
<path d="M600.0,1107.0 h3 l2,2 v3 l-2,2 h-3 l-2,-2 v-3 z" fill="#ff0000" shape-rendering="crispEdges"/>
<path d="M619.0,1144.0 h3 l2,2 v3 l-2,2 h-3 l-2,-2 v-3 z" fill="#ff0000" shape-rendering="crispEdges"/>
<path d="M637.0,916.0 h3 l2,2 v3 l-2,2 h-3 l-2,-2 v-3 z" fill="#ff0000" shape-rendering="crispEdges"/>
<path d="M655.0,981.0 h3 l2,2 v3 l-2,2 h-3 l-2,-2 v-3 z" fill="#ff0000" shape-rendering="crispEdges"/>
<path d="M673.0,1145.0 h3 l2,2 v3 l-2,2 h-3 l-2,-2 v-3 z" fill="#ff0000" shape-rendering="crispEdges"/>
<path d="M691.0,1112.0 h3 l2,2 v3 l-2,2 h-3 l-2,-2 v-3 z" fill="#ff0000" shape-rendering="crispEdges"/>
<path d="M709.0,928.0 h3 l2,2 v3 l-2,2 h-3 l-2,-2 v-3 z" fill="#ff0000" shape-rendering="crispEdges"/>
<path d="M728.0,953.0 h3 l2,2 v3 l-2,2 h-3 l-2,-2 v-3 z" fill="#ff0000" shape-rendering="crispEdges"/>
<path d="M746.0,1043.0 h3 l2,2 v3 l-2,2 h-3 l-2,-2 v-3 z" fill="#ff0000" shape-rendering="crispEdges"/>
<path d="M764.0,1193.0 h3 l2,2 v3 l-2,2 h-3 l-2,-2 v-3 z" fill="#ff0000" shape-rendering="crispEdges"/>
<path d="M782.0,1006.0 h3 l2,2 v3 l-2,2 h-3 l-2,-2 v-3 z" fill="#ff0000" shape-rendering="crispEdges"/>
<path d="M800.0,1156.0 h3 l2,2 v3 l-2,2 h-3 l-2,-2 v-3 z" fill="#ff0000" shape-rendering="crispEdges"/>
<path d="M818.0,1027.0 h3 l2,2 v3 l-2,2 h-3 l-2,-2 v-3 z" fill="#ff0000" shape-rendering="crispEdges"/>
<path d="M837.0,1075.0 h3 l2,2 v3 l-2,2 h-3 l-2,-2 v-3 z" fill="#ff0000" shape-rendering="crispEdges"/>
<path d="M855.0,1021.0 h3 l2,2 v3 l-2,2 h-3 l-2,-2 v-3 z" fill="#ff0000" shape-rendering="crispEdges"/>
<path d="M873.0,1092.0 h3 l2,2 v3 l-2,2 h-3 l-2,-2 v-3 z" fill="#ff0000" shape-rendering="crispEdges"/>
<path d="M891.0,889.0 h3 l2,2 v3 l-2,2 h-3 l-2,-2 v-3 z" fill="#ff0000" shape-rendering="crispEdges"/>
<path d="M909.0,830.0 h3 l2,2 v3 l-2,2 h-3 l-2,-2 v-3 z" fill="#ff0000" shape-rendering="crispEdges"/>
<path d="M928.0,992.0 h3 l2,2 v3 l-2,2 h-3 l-2,-2 v-3 z" fill="#ff0000" shape-rendering="crispEdges"/>
<path d="M946.0,936.0 h3 l2,2 v3 l-2,2 h-3 l-2,-2 v-3 z" fill="#ff0000" shape-rendering="crispEdges"/>
<path d="M964.0,991.0 h3 l2,2 v3 l-2,2 h-3 l-2,-2 v-3 z" fill="#ff0000" shape-rendering="crispEdges"/>
<path d="M982.0,1150.0 h3 l2,2 v3 l-2,2 h-3 l-2,-2 v-3 z" fill="#ff0000" shape-rendering="crispEdges"/>
<path d="M1000.0,991.0 h3 l2,2 v3 l-2,2 h-3 l-2,-2 v-3 z" fill="#ff0000" shape-rendering="crispEdges"/>
<path d="M1018.0,1108.0 h3 l2,2 v3 l-2,2 h-3 l-2,-2 v-3 z" fill="#ff0000" shape-rendering="crispEdges"/>
<path d="M1037.0,1087.0 h3 l2,2 v3 l-2,2 h-3 l-2,-2 v-3 z" fill="#ff0000" shape-rendering="crispEdges"/>
<path d="M1055.0,858.0 h3 l2,2 v3 l-2,2 h-3 l-2,-2 v-3 z" fill="#ff0000" shape-rendering="crispEdges"/>
<path d="M1073.0,857.0 h3 l2,2 v3 l-2,2 h-3 l-2,-2 v-3 z" fill="#ff0000" shape-rendering="crispEdges"/>
<path d="M1091.0,968.0 h3 l2,2 v3 l-2,2 h-3 l-2,-2 v-3 z" fill="#ff0000" shape-rendering="crispEdges"/>
<path d="M1109.0,999.0 h3 l2,2 v3 l-2,2 h-3 l-2,-2 v-3 z" fill="#ff0000" shape-rendering="crispEdges"/>
<path d="M1128.0,961.0 h3 l2,2 v3 l-2,2 h-3 l-2,-2 v-3 z" fill="#ff0000" shape-rendering="crispEdges"/>
<path d="M1146.0,982.0 h3 l2,2 v3 l-2,2 h-3 l-2,-2 v-3 z" fill="#ff0000" shape-rendering="crispEdges"/>
<path d="M1164.0,882.0 h3 l2,2 v3 l-2,2 h-3 l-2,-2 v-3 z" fill="#ff0000" shape-rendering="crispEdges"/>
<path d="M1182.0,994.0 h3 l2,2 v3 l-2,2 h-3 l-2,-2 v-3 z" fill="#ff0000" shape-rendering="crispEdges"/>
<path d="M1200.0,908.0 h3 l2,2 v3 l-2,2 h-3 l-2,-2 v-3 z" fill="#ff0000" shape-rendering="crispEdges"/>
<rect x="627" y="874" width="564" height="3" fill="#000"/>
<rect x="1188" y="798" width="3" height="79" fill="#000"/>
<rect x="622.5" y="793.5" width="565" height="80" fill="#fff" stroke="#000" stroke-width="1"/>
<path d="M692.0,800.0 h3 l2,2 v3 l-2,2 h-3 l-2,-2 v-3 z" fill="#ff0000" shape-rendering="crispEdges"/>
<text x="764.5" y="808.12" font-size="12" text-anchor="start" font-weight="bold" >H1:IMC-DOF_2_Y_IN1 / H1:IMC-DOF_2_Y_IN2</text>
<rect x="644" y="823" width="98" height="1" fill="#0000ff"/>
<text x="764.5" y="828.12" font-size="12" text-anchor="start" font-weight="bold" >H1:IMC-DOF_2_Y_IN1 / H1:IMC-DOF_2_Y_EXC</text>
<rect x="644" y="843" width="98" height="1" fill="#00ff00"/>
<text x="764.5" y="848.12" font-size="12" text-anchor="start" font-weight="bold" >H1:IMC-DOF_2_Y_IN2 / H1:IMC-DOF_2_Y_EXC</text>
<path d="M689.5,860.5 h8.0 L693.5,868.0 z" fill="#876657" shape-rendering="crispEdges"/>
<text x="764.5" y="868.12" font-size="12" text-anchor="start" font-weight="bold" >H1:PSL-ISS_SECONDLOOP_RIN_OUTER_OUT / H1:IMC-DOF_2_Y_EXC</text>
<text transform="translate(165.0,1265) scale(1,1.06)" font-size="23" text-anchor="middle" font-weight="bold" >10<tspan font-size="16.1" dy="-10.3">-1</tspan></text>
<text transform="translate(424.0,1265) scale(1,1.06)" font-size="23" text-anchor="middle" font-weight="bold" >1</text>
<text transform="translate(683.5,1265) scale(1,1.06)" font-size="23" text-anchor="middle" font-weight="bold" >10</text>
<text transform="translate(941.5,1265) scale(1,1.06)" font-size="23" text-anchor="middle" font-weight="bold" >10<tspan font-size="16.1" dy="-10.3">2</tspan></text>
<text transform="translate(1200.5,1265) scale(1,1.06)" font-size="23" text-anchor="middle" font-weight="bold" >10<tspan font-size="16.1" dy="-10.3">3</tspan></text>
<text transform="translate(147.8,1234.4) scale(1,1.06)" font-size="23" text-anchor="end" font-weight="bold" >−200</text>
<text transform="translate(147.8,1180.55) scale(1,1.06)" font-size="23" text-anchor="end" font-weight="bold" >−150</text>
<text transform="translate(147.8,1126.7) scale(1,1.06)" font-size="23" text-anchor="end" font-weight="bold" >−100</text>
<text transform="translate(147.8,1072.85) scale(1,1.06)" font-size="23" text-anchor="end" font-weight="bold" >−50</text>
<text transform="translate(147.8,1019.0) scale(1,1.06)" font-size="23" text-anchor="end" font-weight="bold" >0</text>
<text transform="translate(147.8,965.15) scale(1,1.06)" font-size="23" text-anchor="end" font-weight="bold" >50</text>
<text transform="translate(147.8,911.3) scale(1,1.06)" font-size="23" text-anchor="end" font-weight="bold" >100</text>
<text transform="translate(147.8,857.45) scale(1,1.06)" font-size="23" text-anchor="end" font-weight="bold" >150</text>
<text transform="translate(147.8,803.6) scale(1,1.06)" font-size="23" text-anchor="end" font-weight="bold" >200</text>
<text x="683.5" y="1299" font-size="25" text-anchor="middle" font-weight="bold" >Frequency (Hz)</text>
<text transform="translate(74.2,1007.0) rotate(-90)" font-size="26.1" text-anchor="middle" font-weight="bold">Phase (deg)</text>
<text x="53" y="1341" font-size="23" text-anchor="start" font-weight="bold" >T0=30/09/2025 14:52:54.010009</text>
<text x="619" y="1341" font-size="23" text-anchor="start" font-weight="bold" >Avg=3</text>
<rect x="39" y="724" width="389" height="30" fill="#000"/>
<rect x="41.5" y="721.5" width="388" height="30" fill="#f3f3f3" stroke="#000" stroke-width="1"/>
<text x="236.0" y="745.5" font-size="25" text-anchor="middle" font-weight="bold" >Transfer function</text>
<line x1="1438.5" x2="1438.5" y1="780" y2="1233" stroke="#000" stroke-width="1" stroke-dasharray="1,2" shape-rendering="crispEdges"/>
<line x1="1697.5" x2="1697.5" y1="780" y2="1233" stroke="#000" stroke-width="1" stroke-dasharray="1,2" shape-rendering="crispEdges"/>
<line x1="1956.5" x2="1956.5" y1="780" y2="1233" stroke="#000" stroke-width="1" stroke-dasharray="1,2" shape-rendering="crispEdges"/>
<line x1="2215.5" x2="2215.5" y1="780" y2="1233" stroke="#000" stroke-width="1" stroke-dasharray="1,2" shape-rendering="crispEdges"/>
<line x1="2474.5" x2="2474.5" y1="780" y2="1233" stroke="#000" stroke-width="1" stroke-dasharray="1,2" shape-rendering="crispEdges"/>
<rect x="1438" y="1217" width="1" height="17" fill="#000"/>
<rect x="1438" y="780" width="1" height="16" fill="#000"/>
<rect x="1516" y="1225" width="1" height="9" fill="#000"/>
<rect x="1516" y="780" width="1" height="8" fill="#000"/>
<rect x="1562" y="1225" width="1" height="9" fill="#000"/>
<rect x="1562" y="780" width="1" height="8" fill="#000"/>
<rect x="1594" y="1225" width="1" height="9" fill="#000"/>
<rect x="1594" y="780" width="1" height="8" fill="#000"/>
<rect x="1619" y="1225" width="1" height="9" fill="#000"/>
<rect x="1619" y="780" width="1" height="8" fill="#000"/>
<rect x="1640" y="1225" width="1" height="9" fill="#000"/>
<rect x="1640" y="780" width="1" height="8" fill="#000"/>
<rect x="1657" y="1225" width="1" height="9" fill="#000"/>
<rect x="1657" y="780" width="1" height="8" fill="#000"/>
<rect x="1672" y="1225" width="1" height="9" fill="#000"/>
<rect x="1672" y="780" width="1" height="8" fill="#000"/>
<rect x="1685" y="1225" width="1" height="9" fill="#000"/>
<rect x="1685" y="780" width="1" height="8" fill="#000"/>
<rect x="1697" y="1217" width="1" height="17" fill="#000"/>
<rect x="1697" y="780" width="1" height="16" fill="#000"/>
<rect x="1775" y="1225" width="1" height="9" fill="#000"/>
<rect x="1775" y="780" width="1" height="8" fill="#000"/>
<rect x="1821" y="1225" width="1" height="9" fill="#000"/>
<rect x="1821" y="780" width="1" height="8" fill="#000"/>
<rect x="1853" y="1225" width="1" height="9" fill="#000"/>
<rect x="1853" y="780" width="1" height="8" fill="#000"/>
<rect x="1878" y="1225" width="1" height="9" fill="#000"/>
<rect x="1878" y="780" width="1" height="8" fill="#000"/>
<rect x="1899" y="1225" width="1" height="9" fill="#000"/>
<rect x="1899" y="780" width="1" height="8" fill="#000"/>
<rect x="1916" y="1225" width="1" height="9" fill="#000"/>
<rect x="1916" y="780" width="1" height="8" fill="#000"/>
<rect x="1931" y="1225" width="1" height="9" fill="#000"/>
<rect x="1931" y="780" width="1" height="8" fill="#000"/>
<rect x="1944" y="1225" width="1" height="9" fill="#000"/>
<rect x="1944" y="780" width="1" height="8" fill="#000"/>
<rect x="1956" y="1217" width="1" height="17" fill="#000"/>
<rect x="1956" y="780" width="1" height="16" fill="#000"/>
<rect x="2034" y="1225" width="1" height="9" fill="#000"/>
<rect x="2034" y="780" width="1" height="8" fill="#000"/>
<rect x="2080" y="1225" width="1" height="9" fill="#000"/>
<rect x="2080" y="780" width="1" height="8" fill="#000"/>
<rect x="2112" y="1225" width="1" height="9" fill="#000"/>
<rect x="2112" y="780" width="1" height="8" fill="#000"/>
<rect x="2137" y="1225" width="1" height="9" fill="#000"/>
<rect x="2137" y="780" width="1" height="8" fill="#000"/>
<rect x="2158" y="1225" width="1" height="9" fill="#000"/>
<rect x="2158" y="780" width="1" height="8" fill="#000"/>
<rect x="2175" y="1225" width="1" height="9" fill="#000"/>
<rect x="2175" y="780" width="1" height="8" fill="#000"/>
<rect x="2190" y="1225" width="1" height="9" fill="#000"/>
<rect x="2190" y="780" width="1" height="8" fill="#000"/>
<rect x="2203" y="1225" width="1" height="9" fill="#000"/>
<rect x="2203" y="780" width="1" height="8" fill="#000"/>
<rect x="2215" y="1217" width="1" height="17" fill="#000"/>
<rect x="2215" y="780" width="1" height="16" fill="#000"/>
<rect x="2293" y="1225" width="1" height="9" fill="#000"/>
<rect x="2293" y="780" width="1" height="8" fill="#000"/>
<rect x="2339" y="1225" width="1" height="9" fill="#000"/>
<rect x="2339" y="780" width="1" height="8" fill="#000"/>
<rect x="2371" y="1225" width="1" height="9" fill="#000"/>
<rect x="2371" y="780" width="1" height="8" fill="#000"/>
<rect x="2396" y="1225" width="1" height="9" fill="#000"/>
<rect x="2396" y="780" width="1" height="8" fill="#000"/>
<rect x="2417" y="1225" width="1" height="9" fill="#000"/>
<rect x="2417" y="780" width="1" height="8" fill="#000"/>
<rect x="2434" y="1225" width="1" height="9" fill="#000"/>
<rect x="2434" y="780" width="1" height="8" fill="#000"/>
<rect x="2449" y="1225" width="1" height="9" fill="#000"/>
<rect x="2449" y="780" width="1" height="8" fill="#000"/>
<rect x="2462" y="1225" width="1" height="9" fill="#000"/>
<rect x="2462" y="780" width="1" height="8" fill="#000"/>
<rect x="2474" y="1217" width="1" height="17" fill="#000"/>
<rect x="2474" y="780" width="1" height="16" fill="#000"/>
<rect x="1426" y="780" width="1060" height="1" fill="#000"/>
<rect x="1426" y="1233" width="1060" height="1" fill="#000"/>
<rect x="1426" y="780" width="1" height="454" fill="#000"/>
<rect x="2485" y="780" width="1" height="454" fill="#000"/>
<line x1="1428" x2="2485" y1="1188.5" y2="1188.5" stroke="#000" stroke-width="1" stroke-dasharray="1,2" shape-rendering="crispEdges"/>
<rect x="1426" y="1188" width="27" height="1" fill="#000"/>
<rect x="2459" y="1188" width="27" height="1" fill="#000"/>
<line x1="1428" x2="2485" y1="1143.5" y2="1143.5" stroke="#000" stroke-width="1" stroke-dasharray="1,2" shape-rendering="crispEdges"/>
<rect x="1426" y="1143" width="27" height="1" fill="#000"/>
<rect x="2459" y="1143" width="27" height="1" fill="#000"/>
<line x1="1428" x2="2485" y1="1097.5" y2="1097.5" stroke="#000" stroke-width="1" stroke-dasharray="1,2" shape-rendering="crispEdges"/>
<rect x="1426" y="1097" width="27" height="1" fill="#000"/>
<rect x="2459" y="1097" width="27" height="1" fill="#000"/>
<line x1="1428" x2="2485" y1="1052.5" y2="1052.5" stroke="#000" stroke-width="1" stroke-dasharray="1,2" shape-rendering="crispEdges"/>
<rect x="1426" y="1052" width="27" height="1" fill="#000"/>
<rect x="2459" y="1052" width="27" height="1" fill="#000"/>
<line x1="1428" x2="2485" y1="1007.5" y2="1007.5" stroke="#000" stroke-width="1" stroke-dasharray="1,2" shape-rendering="crispEdges"/>
<rect x="1426" y="1007" width="27" height="1" fill="#000"/>
<rect x="2459" y="1007" width="27" height="1" fill="#000"/>
<line x1="1428" x2="2485" y1="962.5" y2="962.5" stroke="#000" stroke-width="1" stroke-dasharray="1,2" shape-rendering="crispEdges"/>
<rect x="1426" y="962" width="27" height="1" fill="#000"/>
<rect x="2459" y="962" width="27" height="1" fill="#000"/>
<line x1="1428" x2="2485" y1="916.5" y2="916.5" stroke="#000" stroke-width="1" stroke-dasharray="1,2" shape-rendering="crispEdges"/>
<rect x="1426" y="916" width="27" height="1" fill="#000"/>
<rect x="2459" y="916" width="27" height="1" fill="#000"/>
<line x1="1428" x2="2485" y1="871.5" y2="871.5" stroke="#000" stroke-width="1" stroke-dasharray="1,2" shape-rendering="crispEdges"/>
<rect x="1426" y="871" width="27" height="1" fill="#000"/>
<rect x="2459" y="871" width="27" height="1" fill="#000"/>
<line x1="1428" x2="2485" y1="826.5" y2="826.5" stroke="#000" stroke-width="1" stroke-dasharray="1,2" shape-rendering="crispEdges"/>
<rect x="1426" y="826" width="27" height="1" fill="#000"/>
<rect x="2459" y="826" width="27" height="1" fill="#000"/>
<rect x="1426" y="1224" width="14" height="1" fill="#000"/>
<rect x="2472" y="1224" width="14" height="1" fill="#000"/>
<rect x="1426" y="1215" width="14" height="1" fill="#000"/>
<rect x="2472" y="1215" width="14" height="1" fill="#000"/>
<rect x="1426" y="1206" width="14" height="1" fill="#000"/>
<rect x="2472" y="1206" width="14" height="1" fill="#000"/>
<rect x="1426" y="1197" width="14" height="1" fill="#000"/>
<rect x="2472" y="1197" width="14" height="1" fill="#000"/>
<rect x="1426" y="1179" width="14" height="1" fill="#000"/>
<rect x="2472" y="1179" width="14" height="1" fill="#000"/>
<rect x="1426" y="1170" width="14" height="1" fill="#000"/>
<rect x="2472" y="1170" width="14" height="1" fill="#000"/>
<rect x="1426" y="1161" width="14" height="1" fill="#000"/>
<rect x="2472" y="1161" width="14" height="1" fill="#000"/>
<rect x="1426" y="1152" width="14" height="1" fill="#000"/>
<rect x="2472" y="1152" width="14" height="1" fill="#000"/>
<rect x="1426" y="1134" width="14" height="1" fill="#000"/>
<rect x="2472" y="1134" width="14" height="1" fill="#000"/>
<rect x="1426" y="1124" width="14" height="1" fill="#000"/>
<rect x="2472" y="1124" width="14" height="1" fill="#000"/>
<rect x="1426" y="1115" width="14" height="1" fill="#000"/>
<rect x="2472" y="1115" width="14" height="1" fill="#000"/>
<rect x="1426" y="1106" width="14" height="1" fill="#000"/>
<rect x="2472" y="1106" width="14" height="1" fill="#000"/>
<rect x="1426" y="1088" width="14" height="1" fill="#000"/>
<rect x="2472" y="1088" width="14" height="1" fill="#000"/>
<rect x="1426" y="1079" width="14" height="1" fill="#000"/>
<rect x="2472" y="1079" width="14" height="1" fill="#000"/>
<rect x="1426" y="1070" width="14" height="1" fill="#000"/>
<rect x="2472" y="1070" width="14" height="1" fill="#000"/>
<rect x="1426" y="1061" width="14" height="1" fill="#000"/>
<rect x="2472" y="1061" width="14" height="1" fill="#000"/>
<rect x="1426" y="1043" width="14" height="1" fill="#000"/>
<rect x="2472" y="1043" width="14" height="1" fill="#000"/>
<rect x="1426" y="1034" width="14" height="1" fill="#000"/>
<rect x="2472" y="1034" width="14" height="1" fill="#000"/>
<rect x="1426" y="1025" width="14" height="1" fill="#000"/>
<rect x="2472" y="1025" width="14" height="1" fill="#000"/>
<rect x="1426" y="1016" width="14" height="1" fill="#000"/>
<rect x="2472" y="1016" width="14" height="1" fill="#000"/>
<rect x="1426" y="998" width="14" height="1" fill="#000"/>
<rect x="2472" y="998" width="14" height="1" fill="#000"/>
<rect x="1426" y="989" width="14" height="1" fill="#000"/>
<rect x="2472" y="989" width="14" height="1" fill="#000"/>
<rect x="1426" y="980" width="14" height="1" fill="#000"/>
<rect x="2472" y="980" width="14" height="1" fill="#000"/>
<rect x="1426" y="971" width="14" height="1" fill="#000"/>
<rect x="2472" y="971" width="14" height="1" fill="#000"/>
<rect x="1426" y="953" width="14" height="1" fill="#000"/>
<rect x="2472" y="953" width="14" height="1" fill="#000"/>
<rect x="1426" y="944" width="14" height="1" fill="#000"/>
<rect x="2472" y="944" width="14" height="1" fill="#000"/>
<rect x="1426" y="935" width="14" height="1" fill="#000"/>
<rect x="2472" y="935" width="14" height="1" fill="#000"/>
<rect x="1426" y="926" width="14" height="1" fill="#000"/>
<rect x="2472" y="926" width="14" height="1" fill="#000"/>
<rect x="1426" y="907" width="14" height="1" fill="#000"/>
<rect x="2472" y="907" width="14" height="1" fill="#000"/>
<rect x="1426" y="898" width="14" height="1" fill="#000"/>
<rect x="2472" y="898" width="14" height="1" fill="#000"/>
<rect x="1426" y="889" width="14" height="1" fill="#000"/>
<rect x="2472" y="889" width="14" height="1" fill="#000"/>
<rect x="1426" y="880" width="14" height="1" fill="#000"/>
<rect x="2472" y="880" width="14" height="1" fill="#000"/>
<rect x="1426" y="862" width="14" height="1" fill="#000"/>
<rect x="2472" y="862" width="14" height="1" fill="#000"/>
<rect x="1426" y="853" width="14" height="1" fill="#000"/>
<rect x="2472" y="853" width="14" height="1" fill="#000"/>
<rect x="1426" y="844" width="14" height="1" fill="#000"/>
<rect x="2472" y="844" width="14" height="1" fill="#000"/>
<rect x="1426" y="835" width="14" height="1" fill="#000"/>
<rect x="2472" y="835" width="14" height="1" fill="#000"/>
<rect x="1426" y="817" width="14" height="1" fill="#000"/>
<rect x="2472" y="817" width="14" height="1" fill="#000"/>
<rect x="1426" y="808" width="14" height="1" fill="#000"/>
<rect x="2472" y="808" width="14" height="1" fill="#000"/>
<rect x="1426" y="799" width="14" height="1" fill="#000"/>
<rect x="2472" y="799" width="14" height="1" fill="#000"/>
<rect x="1426" y="790" width="14" height="1" fill="#000"/>
<rect x="2472" y="790" width="14" height="1" fill="#000"/>
<polyline points="1438.5,822.9 1456.7,895.6 1474.9,846.1 1493.0,836.5 1511.2,1029.0 1529.4,890.8 1547.6,854.1 1565.8,792.3 1583.9,804.2 1602.1,805.4 1620.3,915.6 1638.5,885.2 1656.7,857.3 1674.8,814.9 1693.0,952.0 1711.2,1099.2 1729.4,902.0 1747.6,946.0 1765.7,1078.5 1783.9,1060.9 1802.1,1120.0 1820.3,1024.2 1838.5,1107.2 1856.6,977.0 1874.8,1085.7 1893.0,1187.1 1911.2,1131.2 1929.4,1177.5 1947.5,1076.9 1965.7,1178.3 1983.9,1094.5 2002.1,919.6 2020.3,1009.8 2038.4,1193.5 2056.6,1102.4 2074.8,1045.7 2093.0,990.7 2111.2,1013.0 2129.3,1194.3 2147.5,1207.6 2165.7,1191.9 2183.9,831.0 2202.1,1019.4 2220.2,984.3 2238.4,1222.0 2256.6,1120.0 2274.8,894.0 2293.0,982.0 2311.1,1066.0 2329.3,1163.1 2347.5,1149.6 2365.7,1034.6 2383.9,1158.4 2402.0,1127.7 2420.2,1181.5 2438.4,1123.2 2456.6,893.0 2474.8,1122.4" fill="none" stroke="#00ff00" stroke-width="1" shape-rendering="crispEdges" stroke-linejoin="bevel"/>
<polyline points="1438.5,832.0 1456.7,905.7 1474.9,864.0 1493.0,849.8 1511.2,1058.2 1529.4,920.7 1547.6,875.2 1565.8,796.6 1583.9,813.7 1602.1,813.7 1620.3,947.0 1638.5,921.6 1656.7,877.7 1674.8,835.7 1693.0,974.2 1711.2,1117.3 1729.4,919.6 1747.6,947.8 1765.7,1076.1 1783.9,1043.3 1802.1,1102.0 1820.3,1028.6 1838.5,1117.3 1856.6,983.5 1874.8,1125.1 1893.0,1191.1 1911.2,1126.4 1929.4,1173.5 1947.5,1074.5 1965.7,1172.7 1983.9,1093.2 2002.1,930.0 2020.3,1008.2 2038.4,1174.3 2056.6,1075.3 2074.8,1032.2 2093.0,985.4 2111.2,1017.5 2129.3,1198.3 2147.5,1097.3 2165.7,1204.4 2183.9,1184.2 2202.1,1146.4 2220.2,1037.4 2238.4,1206.3 2256.6,1078.5 2274.8,977.9 2293.0,1228.2 2311.1,870.5 2329.3,1222.3 2347.5,933.5 2365.7,915.3 2383.9,882.3 2402.0,1007.9 2420.2,1172.4 2438.4,1178.3 2456.6,1135.7 2474.8,1031.8" fill="none" stroke="#0000ff" stroke-width="1" shape-rendering="crispEdges" stroke-linejoin="bevel"/>
<path d="M1435.0,835.5 h7.0 L1438.5,828.5 z" fill="#0000ff" shape-rendering="crispEdges"/>
<path d="M1453.0,908.5 h7.0 L1456.5,901.5 z" fill="#0000ff" shape-rendering="crispEdges"/>
<path d="M1471.0,867.5 h7.0 L1474.5,860.5 z" fill="#0000ff" shape-rendering="crispEdges"/>
<path d="M1490.0,852.5 h7.0 L1493.5,845.5 z" fill="#0000ff" shape-rendering="crispEdges"/>
<path d="M1508.0,1061.5 h7.0 L1511.5,1054.5 z" fill="#0000ff" shape-rendering="crispEdges"/>
<path d="M1526.0,923.5 h7.0 L1529.5,916.5 z" fill="#0000ff" shape-rendering="crispEdges"/>
<path d="M1544.0,878.5 h7.0 L1547.5,871.5 z" fill="#0000ff" shape-rendering="crispEdges"/>
<path d="M1562.0,799.5 h7.0 L1565.5,792.5 z" fill="#0000ff" shape-rendering="crispEdges"/>
<path d="M1580.0,816.5 h7.0 L1583.5,809.5 z" fill="#0000ff" shape-rendering="crispEdges"/>
<path d="M1599.0,816.5 h7.0 L1602.5,809.5 z" fill="#0000ff" shape-rendering="crispEdges"/>
<path d="M1617.0,950.5 h7.0 L1620.5,943.5 z" fill="#0000ff" shape-rendering="crispEdges"/>
<path d="M1635.0,924.5 h7.0 L1638.5,917.5 z" fill="#0000ff" shape-rendering="crispEdges"/>
<path d="M1653.0,880.5 h7.0 L1656.5,873.5 z" fill="#0000ff" shape-rendering="crispEdges"/>
<path d="M1671.0,838.5 h7.0 L1674.5,831.5 z" fill="#0000ff" shape-rendering="crispEdges"/>
<path d="M1690.0,977.5 h7.0 L1693.5,970.5 z" fill="#0000ff" shape-rendering="crispEdges"/>
<path d="M1708.0,1120.5 h7.0 L1711.5,1113.5 z" fill="#0000ff" shape-rendering="crispEdges"/>
<path d="M1726.0,922.5 h7.0 L1729.5,915.5 z" fill="#0000ff" shape-rendering="crispEdges"/>
<path d="M1744.0,950.5 h7.0 L1747.5,943.5 z" fill="#0000ff" shape-rendering="crispEdges"/>
<path d="M1762.0,1079.5 h7.0 L1765.5,1072.5 z" fill="#0000ff" shape-rendering="crispEdges"/>
<path d="M1780.0,1046.5 h7.0 L1783.5,1039.5 z" fill="#0000ff" shape-rendering="crispEdges"/>
<path d="M1799.0,1105.5 h7.0 L1802.5,1098.5 z" fill="#0000ff" shape-rendering="crispEdges"/>
<path d="M1817.0,1031.5 h7.0 L1820.5,1024.5 z" fill="#0000ff" shape-rendering="crispEdges"/>
<path d="M1835.0,1120.5 h7.0 L1838.5,1113.5 z" fill="#0000ff" shape-rendering="crispEdges"/>
<path d="M1853.0,986.5 h7.0 L1856.5,979.5 z" fill="#0000ff" shape-rendering="crispEdges"/>
<path d="M1871.0,1128.5 h7.0 L1874.5,1121.5 z" fill="#0000ff" shape-rendering="crispEdges"/>
<path d="M1890.0,1194.5 h7.0 L1893.5,1187.5 z" fill="#0000ff" shape-rendering="crispEdges"/>
<path d="M1908.0,1129.5 h7.0 L1911.5,1122.5 z" fill="#0000ff" shape-rendering="crispEdges"/>
<path d="M1926.0,1176.5 h7.0 L1929.5,1169.5 z" fill="#0000ff" shape-rendering="crispEdges"/>
<path d="M1944.0,1077.5 h7.0 L1947.5,1070.5 z" fill="#0000ff" shape-rendering="crispEdges"/>
<path d="M1962.0,1175.5 h7.0 L1965.5,1168.5 z" fill="#0000ff" shape-rendering="crispEdges"/>
<path d="M1980.0,1096.5 h7.0 L1983.5,1089.5 z" fill="#0000ff" shape-rendering="crispEdges"/>
<path d="M1999.0,933.5 h7.0 L2002.5,926.5 z" fill="#0000ff" shape-rendering="crispEdges"/>
<path d="M2017.0,1011.5 h7.0 L2020.5,1004.5 z" fill="#0000ff" shape-rendering="crispEdges"/>
<path d="M2035.0,1177.5 h7.0 L2038.5,1170.5 z" fill="#0000ff" shape-rendering="crispEdges"/>
<path d="M2053.0,1078.5 h7.0 L2056.5,1071.5 z" fill="#0000ff" shape-rendering="crispEdges"/>
<path d="M2071.0,1035.5 h7.0 L2074.5,1028.5 z" fill="#0000ff" shape-rendering="crispEdges"/>
<path d="M2089.0,988.5 h7.0 L2092.5,981.5 z" fill="#0000ff" shape-rendering="crispEdges"/>
<path d="M2108.0,1020.5 h7.0 L2111.5,1013.5 z" fill="#0000ff" shape-rendering="crispEdges"/>
<path d="M2126.0,1201.5 h7.0 L2129.5,1194.5 z" fill="#0000ff" shape-rendering="crispEdges"/>
<path d="M2144.0,1100.5 h7.0 L2147.5,1093.5 z" fill="#0000ff" shape-rendering="crispEdges"/>
<path d="M2162.0,1207.5 h7.0 L2165.5,1200.5 z" fill="#0000ff" shape-rendering="crispEdges"/>
<path d="M2180.0,1187.5 h7.0 L2183.5,1180.5 z" fill="#0000ff" shape-rendering="crispEdges"/>
<path d="M2199.0,1149.5 h7.0 L2202.5,1142.5 z" fill="#0000ff" shape-rendering="crispEdges"/>
<path d="M2217.0,1040.5 h7.0 L2220.5,1033.5 z" fill="#0000ff" shape-rendering="crispEdges"/>
<path d="M2235.0,1209.5 h7.0 L2238.5,1202.5 z" fill="#0000ff" shape-rendering="crispEdges"/>
<path d="M2253.0,1081.5 h7.0 L2256.5,1074.5 z" fill="#0000ff" shape-rendering="crispEdges"/>
<path d="M2271.0,980.5 h7.0 L2274.5,973.5 z" fill="#0000ff" shape-rendering="crispEdges"/>
<path d="M2289.0,1231.5 h7.0 L2292.5,1224.5 z" fill="#0000ff" shape-rendering="crispEdges"/>
<path d="M2308.0,873.5 h7.0 L2311.5,866.5 z" fill="#0000ff" shape-rendering="crispEdges"/>
<path d="M2326.0,1225.5 h7.0 L2329.5,1218.5 z" fill="#0000ff" shape-rendering="crispEdges"/>
<path d="M2344.0,936.5 h7.0 L2347.5,929.5 z" fill="#0000ff" shape-rendering="crispEdges"/>
<path d="M2362.0,918.5 h7.0 L2365.5,911.5 z" fill="#0000ff" shape-rendering="crispEdges"/>
<path d="M2380.0,885.5 h7.0 L2383.5,878.5 z" fill="#0000ff" shape-rendering="crispEdges"/>
<path d="M2399.0,1010.5 h7.0 L2402.5,1003.5 z" fill="#0000ff" shape-rendering="crispEdges"/>
<path d="M2417.0,1175.5 h7.0 L2420.5,1168.5 z" fill="#0000ff" shape-rendering="crispEdges"/>
<path d="M2435.0,1181.5 h7.0 L2438.5,1174.5 z" fill="#0000ff" shape-rendering="crispEdges"/>
<path d="M2453.0,1138.5 h7.0 L2456.5,1131.5 z" fill="#0000ff" shape-rendering="crispEdges"/>
<path d="M2471.0,1034.5 h7.0 L2474.5,1027.5 z" fill="#0000ff" shape-rendering="crispEdges"/>
<polyline points="1438.5,782.2 1456.7,782.2 1474.9,784.1 1493.0,783.0 1511.2,788.3 1529.4,784.3 1547.6,782.2 1565.8,781.1 1583.9,781.4 1602.1,783.0 1620.3,786.2 1638.5,790.5 1656.7,781.4 1674.8,787.3 1693.0,788.3 1711.2,893.5 1729.4,1137.6 1747.6,1106.4 1765.7,1129.6 1783.9,1213.5 1802.1,1231.8 1820.3,1159.5 1838.5,1019.4 1856.6,1106.4 1874.8,1210.6 1893.0,920.4 1911.2,1203.6 1929.4,1024.5 1947.5,1069.7 1965.7,1216.7 1983.9,1021.3 2002.1,907.3 2020.3,1223.4 2038.4,1135.2 2056.6,1214.3 2074.8,1040.5 2093.0,1039.3 2111.2,917.2 2129.3,999.4 2147.5,1070.2 2165.7,834.0 2183.9,1045.4 2202.1,1191.1 2220.2,1075.3 2238.4,1072.1 2256.6,1079.3 2274.8,1197.5 2293.0,1055.3 2311.1,932.7 2329.3,1085.4 2347.5,1213.1 2365.7,1119.2 2383.9,1094.1 2402.0,1168.3 2420.2,1145.3 2438.4,1175.4 2456.6,1230.2 2474.8,1152.3" fill="none" stroke="#ff0000" stroke-width="1" shape-rendering="crispEdges" stroke-linejoin="bevel"/>
<path d="M1437.0,779.0 h3 l2,2 v3 l-2,2 h-3 l-2,-2 v-3 z" fill="#ff0000" shape-rendering="crispEdges"/>
<path d="M1455.0,779.0 h3 l2,2 v3 l-2,2 h-3 l-2,-2 v-3 z" fill="#ff0000" shape-rendering="crispEdges"/>
<path d="M1473.0,781.0 h3 l2,2 v3 l-2,2 h-3 l-2,-2 v-3 z" fill="#ff0000" shape-rendering="crispEdges"/>
<path d="M1492.0,780.0 h3 l2,2 v3 l-2,2 h-3 l-2,-2 v-3 z" fill="#ff0000" shape-rendering="crispEdges"/>
<path d="M1510.0,785.0 h3 l2,2 v3 l-2,2 h-3 l-2,-2 v-3 z" fill="#ff0000" shape-rendering="crispEdges"/>
<path d="M1528.0,781.0 h3 l2,2 v3 l-2,2 h-3 l-2,-2 v-3 z" fill="#ff0000" shape-rendering="crispEdges"/>
<path d="M1546.0,779.0 h3 l2,2 v3 l-2,2 h-3 l-2,-2 v-3 z" fill="#ff0000" shape-rendering="crispEdges"/>
<path d="M1564.0,778.0 h3 l2,2 v3 l-2,2 h-3 l-2,-2 v-3 z" fill="#ff0000" shape-rendering="crispEdges"/>
<path d="M1582.0,778.0 h3 l2,2 v3 l-2,2 h-3 l-2,-2 v-3 z" fill="#ff0000" shape-rendering="crispEdges"/>
<path d="M1601.0,780.0 h3 l2,2 v3 l-2,2 h-3 l-2,-2 v-3 z" fill="#ff0000" shape-rendering="crispEdges"/>
<path d="M1619.0,783.0 h3 l2,2 v3 l-2,2 h-3 l-2,-2 v-3 z" fill="#ff0000" shape-rendering="crispEdges"/>
<path d="M1637.0,787.0 h3 l2,2 v3 l-2,2 h-3 l-2,-2 v-3 z" fill="#ff0000" shape-rendering="crispEdges"/>
<path d="M1655.0,778.0 h3 l2,2 v3 l-2,2 h-3 l-2,-2 v-3 z" fill="#ff0000" shape-rendering="crispEdges"/>
<path d="M1673.0,784.0 h3 l2,2 v3 l-2,2 h-3 l-2,-2 v-3 z" fill="#ff0000" shape-rendering="crispEdges"/>
<path d="M1692.0,785.0 h3 l2,2 v3 l-2,2 h-3 l-2,-2 v-3 z" fill="#ff0000" shape-rendering="crispEdges"/>
<path d="M1710.0,890.0 h3 l2,2 v3 l-2,2 h-3 l-2,-2 v-3 z" fill="#ff0000" shape-rendering="crispEdges"/>
<path d="M1728.0,1134.0 h3 l2,2 v3 l-2,2 h-3 l-2,-2 v-3 z" fill="#ff0000" shape-rendering="crispEdges"/>
<path d="M1746.0,1103.0 h3 l2,2 v3 l-2,2 h-3 l-2,-2 v-3 z" fill="#ff0000" shape-rendering="crispEdges"/>
<path d="M1764.0,1126.0 h3 l2,2 v3 l-2,2 h-3 l-2,-2 v-3 z" fill="#ff0000" shape-rendering="crispEdges"/>
<path d="M1782.0,1210.0 h3 l2,2 v3 l-2,2 h-3 l-2,-2 v-3 z" fill="#ff0000" shape-rendering="crispEdges"/>
<path d="M1801.0,1228.0 h3 l2,2 v3 l-2,2 h-3 l-2,-2 v-3 z" fill="#ff0000" shape-rendering="crispEdges"/>
<path d="M1819.0,1156.0 h3 l2,2 v3 l-2,2 h-3 l-2,-2 v-3 z" fill="#ff0000" shape-rendering="crispEdges"/>
<path d="M1837.0,1016.0 h3 l2,2 v3 l-2,2 h-3 l-2,-2 v-3 z" fill="#ff0000" shape-rendering="crispEdges"/>
<path d="M1855.0,1103.0 h3 l2,2 v3 l-2,2 h-3 l-2,-2 v-3 z" fill="#ff0000" shape-rendering="crispEdges"/>
<path d="M1873.0,1207.0 h3 l2,2 v3 l-2,2 h-3 l-2,-2 v-3 z" fill="#ff0000" shape-rendering="crispEdges"/>
<path d="M1892.0,917.0 h3 l2,2 v3 l-2,2 h-3 l-2,-2 v-3 z" fill="#ff0000" shape-rendering="crispEdges"/>
<path d="M1910.0,1200.0 h3 l2,2 v3 l-2,2 h-3 l-2,-2 v-3 z" fill="#ff0000" shape-rendering="crispEdges"/>
<path d="M1928.0,1021.0 h3 l2,2 v3 l-2,2 h-3 l-2,-2 v-3 z" fill="#ff0000" shape-rendering="crispEdges"/>
<path d="M1946.0,1066.0 h3 l2,2 v3 l-2,2 h-3 l-2,-2 v-3 z" fill="#ff0000" shape-rendering="crispEdges"/>
<path d="M1964.0,1213.0 h3 l2,2 v3 l-2,2 h-3 l-2,-2 v-3 z" fill="#ff0000" shape-rendering="crispEdges"/>
<path d="M1982.0,1018.0 h3 l2,2 v3 l-2,2 h-3 l-2,-2 v-3 z" fill="#ff0000" shape-rendering="crispEdges"/>
<path d="M2001.0,904.0 h3 l2,2 v3 l-2,2 h-3 l-2,-2 v-3 z" fill="#ff0000" shape-rendering="crispEdges"/>
<path d="M2019.0,1220.0 h3 l2,2 v3 l-2,2 h-3 l-2,-2 v-3 z" fill="#ff0000" shape-rendering="crispEdges"/>
<path d="M2037.0,1132.0 h3 l2,2 v3 l-2,2 h-3 l-2,-2 v-3 z" fill="#ff0000" shape-rendering="crispEdges"/>
<path d="M2055.0,1211.0 h3 l2,2 v3 l-2,2 h-3 l-2,-2 v-3 z" fill="#ff0000" shape-rendering="crispEdges"/>
<path d="M2073.0,1037.0 h3 l2,2 v3 l-2,2 h-3 l-2,-2 v-3 z" fill="#ff0000" shape-rendering="crispEdges"/>
<path d="M2091.0,1036.0 h3 l2,2 v3 l-2,2 h-3 l-2,-2 v-3 z" fill="#ff0000" shape-rendering="crispEdges"/>
<path d="M2110.0,914.0 h3 l2,2 v3 l-2,2 h-3 l-2,-2 v-3 z" fill="#ff0000" shape-rendering="crispEdges"/>
<path d="M2128.0,996.0 h3 l2,2 v3 l-2,2 h-3 l-2,-2 v-3 z" fill="#ff0000" shape-rendering="crispEdges"/>
<path d="M2146.0,1067.0 h3 l2,2 v3 l-2,2 h-3 l-2,-2 v-3 z" fill="#ff0000" shape-rendering="crispEdges"/>
<path d="M2164.0,831.0 h3 l2,2 v3 l-2,2 h-3 l-2,-2 v-3 z" fill="#ff0000" shape-rendering="crispEdges"/>
<path d="M2182.0,1042.0 h3 l2,2 v3 l-2,2 h-3 l-2,-2 v-3 z" fill="#ff0000" shape-rendering="crispEdges"/>
<path d="M2201.0,1188.0 h3 l2,2 v3 l-2,2 h-3 l-2,-2 v-3 z" fill="#ff0000" shape-rendering="crispEdges"/>
<path d="M2219.0,1072.0 h3 l2,2 v3 l-2,2 h-3 l-2,-2 v-3 z" fill="#ff0000" shape-rendering="crispEdges"/>
<path d="M2237.0,1069.0 h3 l2,2 v3 l-2,2 h-3 l-2,-2 v-3 z" fill="#ff0000" shape-rendering="crispEdges"/>
<path d="M2255.0,1076.0 h3 l2,2 v3 l-2,2 h-3 l-2,-2 v-3 z" fill="#ff0000" shape-rendering="crispEdges"/>
<path d="M2273.0,1194.0 h3 l2,2 v3 l-2,2 h-3 l-2,-2 v-3 z" fill="#ff0000" shape-rendering="crispEdges"/>
<path d="M2291.0,1052.0 h3 l2,2 v3 l-2,2 h-3 l-2,-2 v-3 z" fill="#ff0000" shape-rendering="crispEdges"/>
<path d="M2310.0,929.0 h3 l2,2 v3 l-2,2 h-3 l-2,-2 v-3 z" fill="#ff0000" shape-rendering="crispEdges"/>
<path d="M2328.0,1082.0 h3 l2,2 v3 l-2,2 h-3 l-2,-2 v-3 z" fill="#ff0000" shape-rendering="crispEdges"/>
<path d="M2346.0,1210.0 h3 l2,2 v3 l-2,2 h-3 l-2,-2 v-3 z" fill="#ff0000" shape-rendering="crispEdges"/>
<path d="M2364.0,1116.0 h3 l2,2 v3 l-2,2 h-3 l-2,-2 v-3 z" fill="#ff0000" shape-rendering="crispEdges"/>
<path d="M2382.0,1091.0 h3 l2,2 v3 l-2,2 h-3 l-2,-2 v-3 z" fill="#ff0000" shape-rendering="crispEdges"/>
<path d="M2401.0,1165.0 h3 l2,2 v3 l-2,2 h-3 l-2,-2 v-3 z" fill="#ff0000" shape-rendering="crispEdges"/>
<path d="M2419.0,1142.0 h3 l2,2 v3 l-2,2 h-3 l-2,-2 v-3 z" fill="#ff0000" shape-rendering="crispEdges"/>
<path d="M2437.0,1172.0 h3 l2,2 v3 l-2,2 h-3 l-2,-2 v-3 z" fill="#ff0000" shape-rendering="crispEdges"/>
<path d="M2455.0,1227.0 h3 l2,2 v3 l-2,2 h-3 l-2,-2 v-3 z" fill="#ff0000" shape-rendering="crispEdges"/>
<path d="M2473.0,1149.0 h3 l2,2 v3 l-2,2 h-3 l-2,-2 v-3 z" fill="#ff0000" shape-rendering="crispEdges"/>
<rect x="1900" y="855" width="564" height="3" fill="#000"/>
<rect x="2461" y="798" width="3" height="60" fill="#000"/>
<rect x="1895.5" y="793.5" width="565" height="61" fill="#fff" stroke="#000" stroke-width="1"/>
<path d="M1965.0,801.0 h3 l2,2 v3 l-2,2 h-3 l-2,-2 v-3 z" fill="#ff0000" shape-rendering="crispEdges"/>
<text x="2037.5" y="808.62" font-size="12" text-anchor="start" font-weight="bold" >H1:IMC-DOF_2_Y_IN1 / H1:IMC-DOF_2_Y_IN2</text>
<path d="M1963.0,827.5 h7.0 L1966.5,820.5 z" fill="#0000ff" shape-rendering="crispEdges"/>
<text x="2037.5" y="829.12" font-size="12" text-anchor="start" font-weight="bold" >H1:PSL-ISS_SECONDLOOP_RIN_OUTER_OUT / H1:IMC-DOF_2_Y_IN2</text>
<rect x="1917" y="844" width="98" height="1" fill="#00ff00"/>
<text x="2037.5" y="849.12" font-size="12" text-anchor="start" font-weight="bold" >H1:PSL-ISS_SECONDLOOP_RIN_INNER_OUT / H1:IMC-DOF_2_Y_IN2</text>
<text transform="translate(1438.0,1265) scale(1,1.06)" font-size="23" text-anchor="middle" font-weight="bold" >10<tspan font-size="16.1" dy="-10.3">-1</tspan></text>
<text transform="translate(1697.0,1265) scale(1,1.06)" font-size="23" text-anchor="middle" font-weight="bold" >1</text>
<text transform="translate(1956.5,1265) scale(1,1.06)" font-size="23" text-anchor="middle" font-weight="bold" >10</text>
<text transform="translate(2214.5,1265) scale(1,1.06)" font-size="23" text-anchor="middle" font-weight="bold" >10<tspan font-size="16.1" dy="-10.3">2</tspan></text>
<text transform="translate(2473.5,1265) scale(1,1.06)" font-size="23" text-anchor="middle" font-weight="bold" >10<tspan font-size="16.1" dy="-10.3">3</tspan></text>
<text transform="translate(1419.8,1242.3) scale(1,1.06)" font-size="23" text-anchor="end" font-weight="bold" >0</text>
<text transform="translate(1419.8,1197.08) scale(1,1.06)" font-size="23" text-anchor="end" font-weight="bold" >0.1</text>
<text transform="translate(1419.8,1151.86) scale(1,1.06)" font-size="23" text-anchor="end" font-weight="bold" >0.2</text>
<text transform="translate(1419.8,1106.6399999999999) scale(1,1.06)" font-size="23" text-anchor="end" font-weight="bold" >0.3</text>
<text transform="translate(1419.8,1061.4199999999998) scale(1,1.06)" font-size="23" text-anchor="end" font-weight="bold" >0.4</text>
<text transform="translate(1419.8,1016.1999999999999) scale(1,1.06)" font-size="23" text-anchor="end" font-weight="bold" >0.5</text>
<text transform="translate(1419.8,970.98) scale(1,1.06)" font-size="23" text-anchor="end" font-weight="bold" >0.6</text>
<text transform="translate(1419.8,925.76) scale(1,1.06)" font-size="23" text-anchor="end" font-weight="bold" >0.7</text>
<text transform="translate(1419.8,880.54) scale(1,1.06)" font-size="23" text-anchor="end" font-weight="bold" >0.8</text>
<text transform="translate(1419.8,835.3199999999999) scale(1,1.06)" font-size="23" text-anchor="end" font-weight="bold" >0.9</text>
<text transform="translate(1421.3,790.0999999999999) scale(1,1.06)" font-size="23" text-anchor="end" font-weight="bold" >1</text>
<text x="1956.5" y="1299" font-size="25" text-anchor="middle" font-weight="bold" >Frequency (Hz)</text>
<text transform="translate(1351.0,1007.0) rotate(-90)" font-size="26.1" text-anchor="middle" font-weight="bold">Coherence</text>
<text x="1326" y="1341" font-size="23" text-anchor="start" font-weight="bold" >T0=30/09/2025 14:52:54.010009</text>
<text x="1892" y="1341" font-size="23" text-anchor="start" font-weight="bold" >Avg=3</text>
<rect x="1312" y="724" width="441" height="30" fill="#000"/>
<rect x="1314.5" y="721.5" width="440" height="30" fill="#f3f3f3" stroke="#000" stroke-width="1"/>
<text x="1535.0" y="745.5" font-size="25" text-anchor="middle" font-weight="bold" >Coherence function</text>
</svg>
</div></body></html>
